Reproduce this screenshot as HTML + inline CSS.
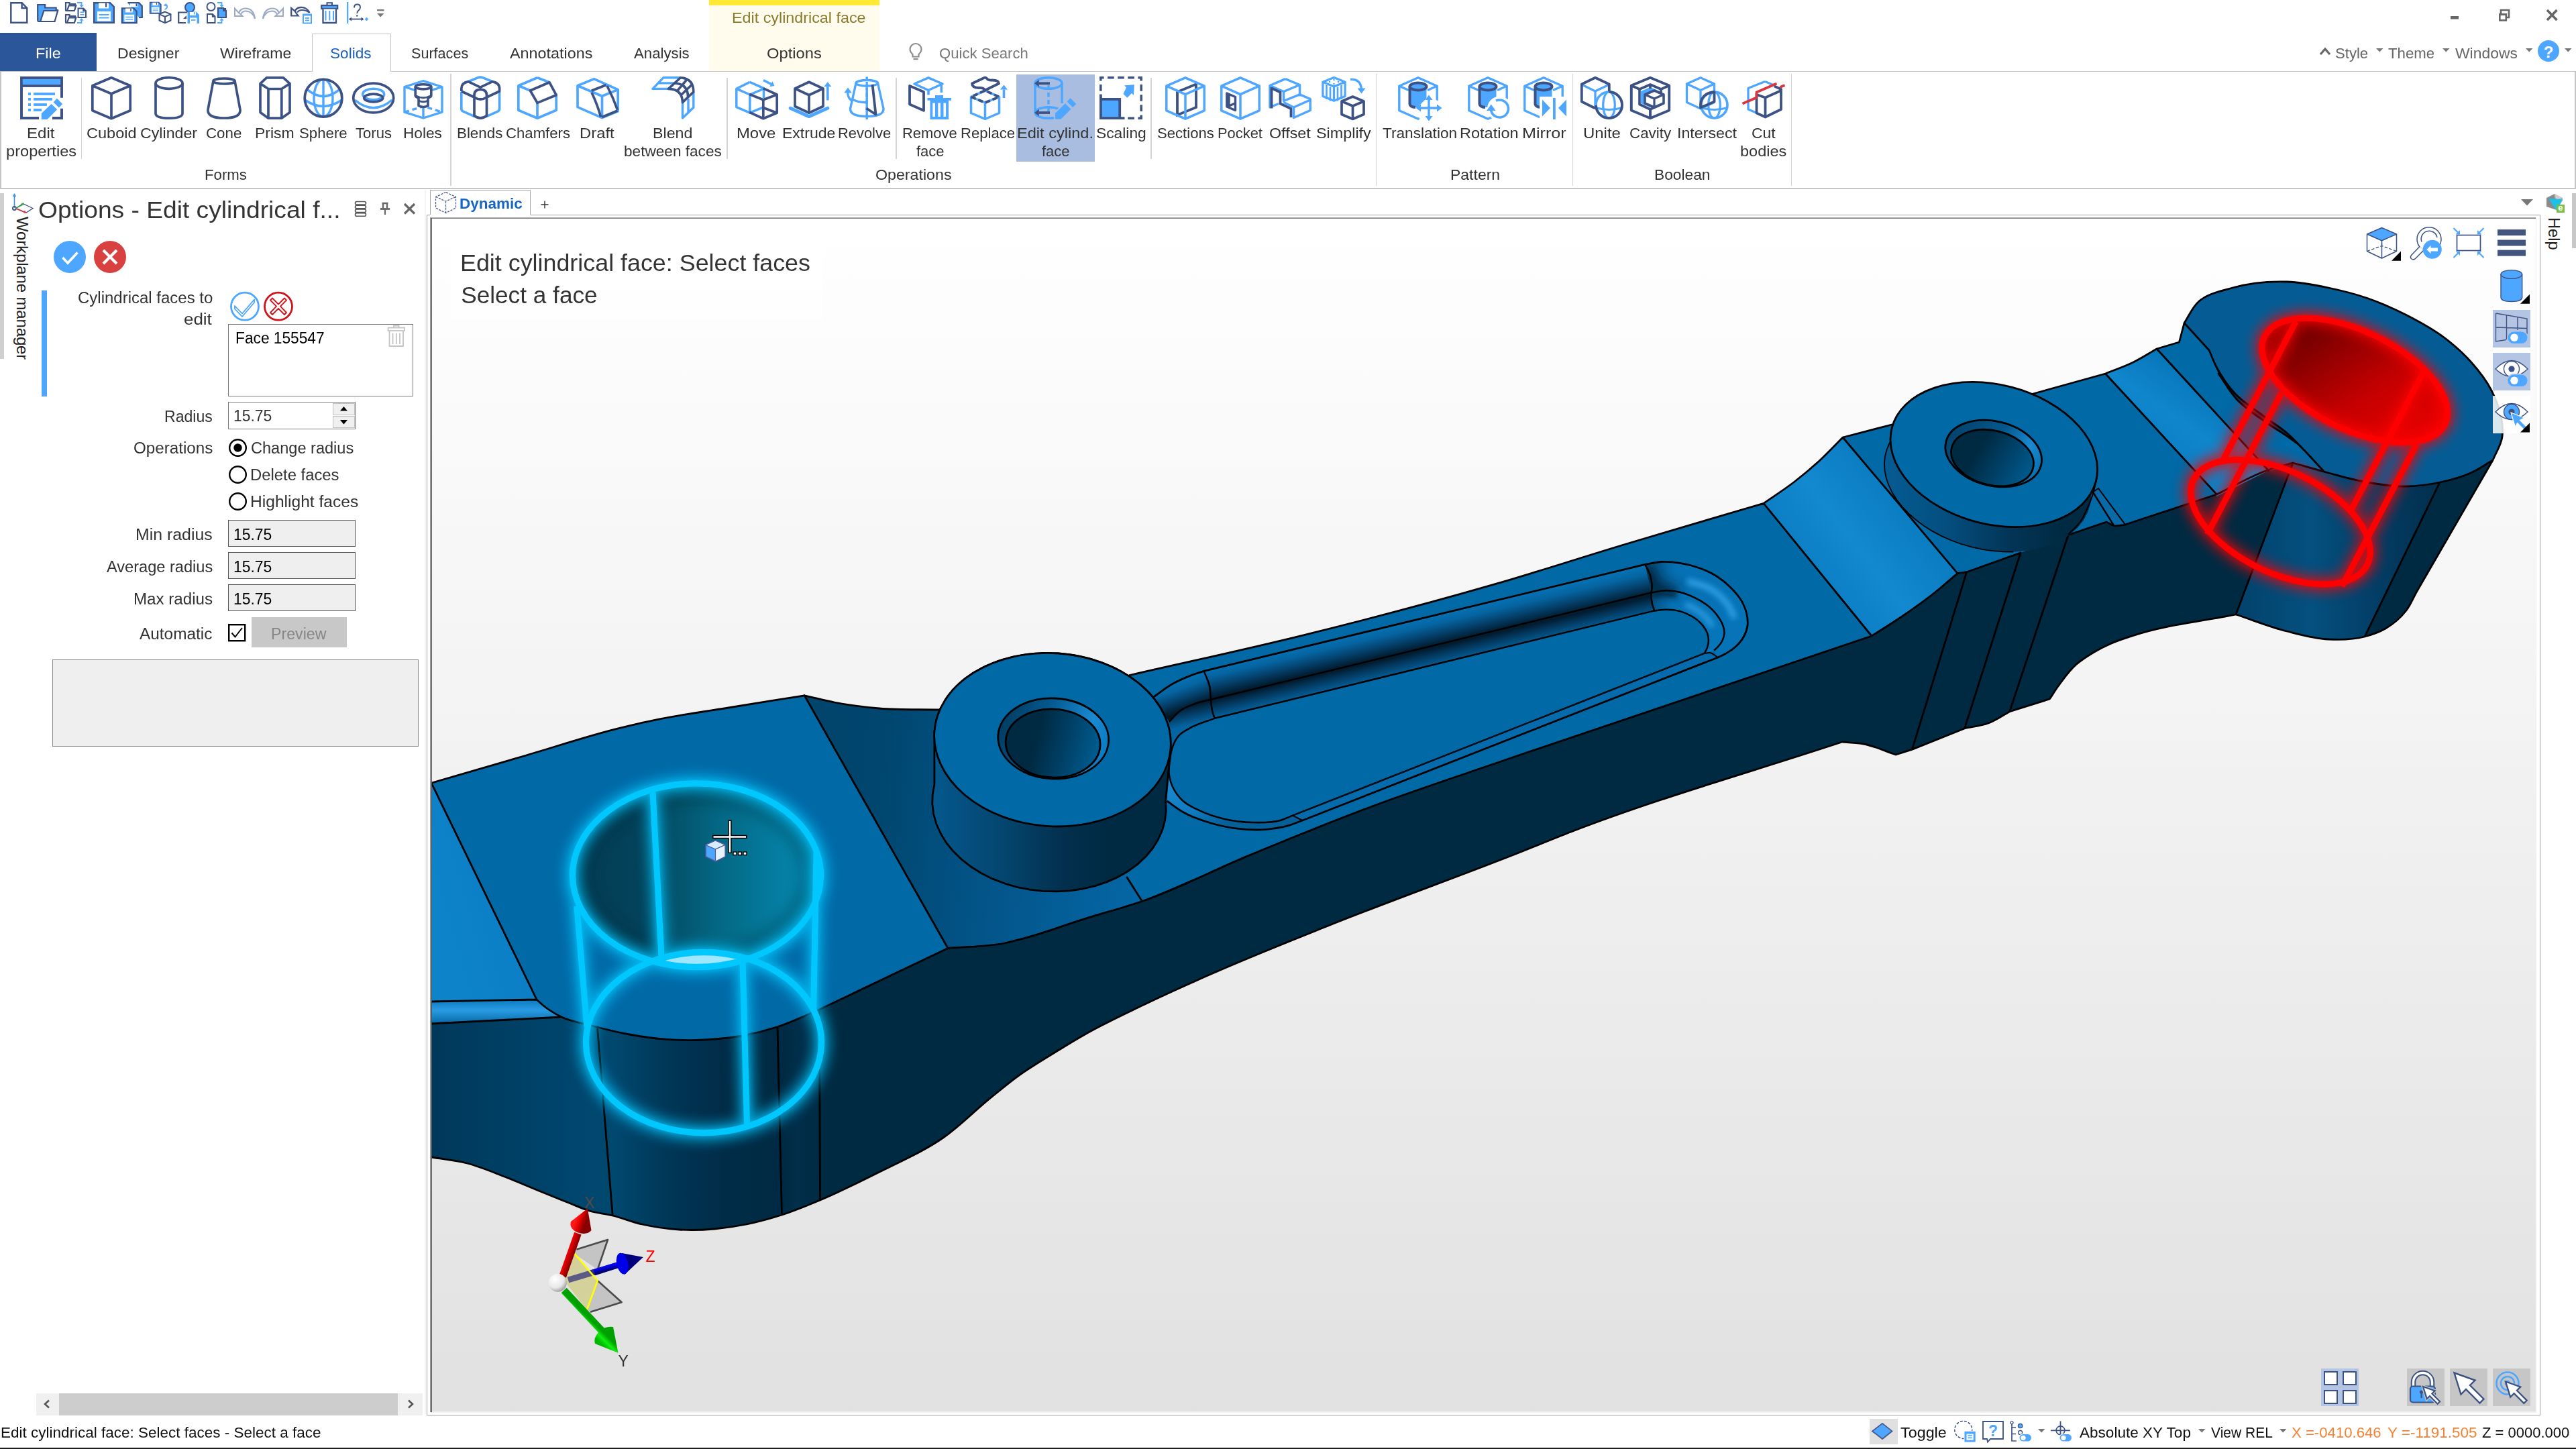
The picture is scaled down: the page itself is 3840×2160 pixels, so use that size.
<!DOCTYPE html>
<html><head><meta charset="utf-8"><title>Designer</title><style>html,body{margin:0;padding:0;width:3840px;height:2160px;overflow:hidden;background:#fff;font-family:"Liberation Sans",sans-serif}
.a{position:absolute;display:block}
.t{position:absolute;white-space:nowrap;line-height:1;transform-origin:0 50%;display:block}
svg{overflow:visible}</style></head><body>
<svg class="a" style="left:15px;top:3px;" width="32" height="32" viewBox="0 0 32 32"><path d="M1.3,1.3L17.62,1.3L25.3,8.98L25.3,30.7L1.3,30.7Z" fill="#fff" stroke="#3d5284" stroke-width="2.4"/><path d="M17.62,1.3L17.62,8.98L25.3,8.98" fill="none" stroke="#3d5284" stroke-width="2.4"/></svg>
<svg class="a" style="left:55px;top:3px;" width="32" height="32" viewBox="0 0 32 32"><path d="M1.2,4L12.18,4L12.18,8.5L28.65,8.5L28.65,12.0L30.785,12.0L26.209999999999997,29L2.42,29Q1.2,29 1.2,26.5Z" fill="#4da6ff" stroke="#3d5284" stroke-width="2.2"/><path d="M5.165,29L10.35,13.0L31.09,13.0L26.514999999999997,29Z" fill="#fff" stroke="#3d5284" stroke-width="2.2"/></svg>
<svg class="a" style="left:97px;top:3px;" width="32" height="32" viewBox="0 0 32 32"><path d="M1,1L6.58,1L6.58,3.16L14.950000000000001,3.16L14.950000000000001,4.84L16.035,4.84L13.709999999999999,13L1.62,13Q1,13 1,11.8Z" fill="#fff" stroke="#3d5284" stroke-width="2.2"/><path d="M3.015,13L5.6499999999999995,5.32L16.189999999999998,5.32L13.865,13Z" fill="#fff" stroke="#3d5284" stroke-width="2.2"/><path d="M1,19L6.58,19L6.58,21.16L14.950000000000001,21.16L14.950000000000001,22.84L16.035,22.84L13.709999999999999,31L1.62,31Q1,31 1,29.8Z" fill="#fff" stroke="#3d5284" stroke-width="2.2"/><path d="M3.015,31L5.6499999999999995,23.32L16.189999999999998,23.32L13.865,31Z" fill="#fff" stroke="#3d5284" stroke-width="2.2"/><path d="M18,1L24.5,1L24.5,5" stroke="#4da6ff" stroke-width="1.8" fill="none"/><path d="M21.3,4.5L27.7,4.5L24.5,8Z" fill="#4da6ff"/><path d="M18,31L24.5,31L24.5,27" stroke="#4da6ff" stroke-width="1.8" fill="none"/><path d="M21.3,27.5L27.7,27.5L24.5,24Z" fill="#4da6ff"/><path d="M19.5,9.5L27.32,9.5L31.0,13.18L31.0,23.0L19.5,23.0Z" fill="#fff" stroke="#3d5284" stroke-width="2"/><path d="M27.32,9.5L27.32,13.18L31.0,13.18" fill="none" stroke="#3d5284" stroke-width="2"/><rect x="22.5" y="14.5" width="6" height="1.6" fill="#4da6ff"/><rect x="22.5" y="18" width="6" height="1.6" fill="#4da6ff"/></svg>
<svg class="a" style="left:139px;top:3px;" width="32" height="32" viewBox="0 0 32 32"><path d="M1.2,1.2L25.0,1.2L30.8,7.0L30.8,30.8L1.2,30.8Z" fill="#4da6ff" stroke="#3d5284" stroke-width="2.40"/><rect x="8.0" y="1.5" width="15.0" height="8.0" fill="#fff"/><rect x="18.0" y="1.5" width="2.2" height="6.0" fill="#3d5284"/><rect x="6.0" y="14.0" width="20.0" height="14.5" fill="#fff"/><rect x="8.5" y="18.0" width="15.0" height="2.0" fill="#4da6ff"/><rect x="8.5" y="22.5" width="15.0" height="2.0" fill="#4da6ff"/></svg>
<svg class="a" style="left:181px;top:3px;" width="32" height="32" viewBox="0 0 32 32"><path d="M9.5,1.2L26,1.2L30.8,6L30.8,23L26,23" fill="#4da6ff" stroke="#3d5284" stroke-width="2.2"/><rect x="13" y="2.3" width="11" height="5" fill="#fff"/><rect x="21.5" y="2.3" width="1.8" height="4" fill="#3d5284"/><path d="M0.88125,9.38125L18.359375,9.38125L22.618750000000002,13.640625L22.618750000000002,31.118750000000002L0.88125,31.118750000000002Z" fill="#4da6ff" stroke="#3d5284" stroke-width="2.29"/><rect x="5.875" y="9.6015625" width="11.015625" height="5.875" fill="#fff"/><rect x="13.21875" y="9.6015625" width="1.615625" height="4.40625" fill="#3d5284"/><rect x="4.40625" y="18.78125" width="14.6875" height="10.6484375" fill="#fff"/><rect x="6.2421875" y="21.71875" width="11.015625" height="1.46875" fill="#4da6ff"/><rect x="6.2421875" y="25.0234375" width="11.015625" height="1.46875" fill="#4da6ff"/></svg>
<svg class="a" style="left:223px;top:3px;" width="32" height="32" viewBox="0 0 32 32"><path d="M0.65625,0.65625L13.671875,0.65625L16.84375,3.828125L16.84375,16.84375L0.65625,16.84375Z" fill="#4da6ff" stroke="#3d5284" stroke-width="1.71"/><rect x="4.375" y="0.8203125" width="8.203125" height="4.375" fill="#fff"/><rect x="9.84375" y="0.8203125" width="1.203125" height="3.28125" fill="#3d5284"/><rect x="3.28125" y="7.65625" width="10.9375" height="7.9296875" fill="#fff"/><rect x="4.6484375" y="9.84375" width="8.203125" height="1.09375" fill="#4da6ff"/><rect x="4.6484375" y="12.3046875" width="8.203125" height="1.09375" fill="#4da6ff"/><path d="M24,3.5Q27.5,5.5 25.5,9Q24.5,10.5 22.5,11" stroke="#4da6ff" stroke-width="1.8" fill="none"/><path d="M20.5,5L24.5,2L25,6.5Z" fill="#4da6ff"/><path d="M23,14.5L14.5,18.2L14.5,27.5L23,31.2L31.5,27.5L31.5,18.2Z" fill="#fff" stroke="#3d5284" stroke-width="2"/><path d="M14.5,18.2L23,22L31.5,18.2M23,22L23,31.2" stroke="#3d5284" stroke-width="2" fill="none"/></svg>
<svg class="a" style="left:265px;top:3px;" width="32" height="32" viewBox="0 0 32 32"><circle cx="18" cy="8" r="7" fill="#4da6ff" stroke="#3d5284" stroke-width="2"/><path d="M1.2,15.5L14,15.5M1.2,14.5L1.2,31L12,31" stroke="#3d5284" stroke-width="2.2" fill="none"/><path d="M8,25L13,25L13,20Z" fill="#3d5284"/><path d="M14.5,14.5L27.5,14.5L32,19L32,32L14.5,32Z" fill="#4da6ff"/><rect x="18" y="15" width="9" height="5" fill="#fff"/><rect x="24" y="15" width="1.6" height="3.5" fill="#4da6ff"/><rect x="18" y="23.5" width="10.5" height="8.5" fill="#fff"/><rect x="20" y="26" width="6.5" height="1.8" fill="#4da6ff"/></svg>
<svg class="a" style="left:308px;top:3px;" width="32" height="32" viewBox="0 0 32 32"><circle cx="6.5" cy="7" r="6" fill="#fff" stroke="#3d5284" stroke-width="2"/><path d="M1,18L8.82,18L12.5,21.68L12.5,31L1,31Z" fill="#fff" stroke="#3d5284" stroke-width="2"/><path d="M8.82,18L8.82,21.68L12.5,21.68" fill="none" stroke="#3d5284" stroke-width="2"/><path d="M16,1L22.5,1L22.5,5" stroke="#4da6ff" stroke-width="1.8" fill="none"/><path d="M19.3,4.5L25.7,4.5L22.5,8Z" fill="#4da6ff"/><path d="M16,31L22.5,31L22.5,27" stroke="#4da6ff" stroke-width="1.8" fill="none"/><path d="M19.3,27.5L25.7,27.5L22.5,24Z" fill="#4da6ff"/><path d="M17,9L25.16,9L29,12.84L29,23L17,23Z" fill="#4da6ff" stroke="#3d5284" stroke-width="2.2"/><path d="M25.16,9L25.16,12.84L29,12.84" fill="none" stroke="#3d5284" stroke-width="2.2"/><path d="M25.2,9L29,9L29,13.4Z" fill="#3d5284"/></svg>
<svg class="a" style="left:349px;top:3px;" width="32" height="32" viewBox="0 0 32 32"><path d="M31,25Q29,9 16,9.5Q9,10 6.5,17" stroke="#9daac6" stroke-width="2.2" fill="none"/><path d="M31,25Q27,13 16.5,13.5Q12,14 10,18" stroke="#9daac6" stroke-width="1.8" fill="none"/><path d="M1,9.5L1,21L12.5,21L9.5,18L6.8,16Z" fill="none" stroke="#9daac6" stroke-width="2"/></svg>
<svg class="a" style="left:391px;top:3px;" width="32" height="32" viewBox="0 0 32 32"><g transform="translate(32,0) scale(-1,1)"><path d="M31,25Q29,9 16,9.5Q9,10 6.5,17" stroke="#9daac6" stroke-width="2.2" fill="none"/><path d="M31,25Q27,13 16.5,13.5Q12,14 10,18" stroke="#9daac6" stroke-width="1.8" fill="none"/><path d="M1,9.5L1,21L12.5,21L9.5,18L6.8,16Z" fill="none" stroke="#9daac6" stroke-width="2"/></g></svg>
<svg class="a" style="left:433px;top:3px;" width="32" height="32" viewBox="0 0 32 32"><path d="M28.5,16Q24,7.5 15,8Q9,8.5 6.5,13.5" stroke="#3d5284" stroke-width="2.3" fill="none"/><path d="M28.5,16Q23,11.5 16,12Q12,12.5 10,15.5" stroke="#3d5284" stroke-width="2" fill="none"/><path d="M1.2,9L1.2,20.5L11.5,20.5L9.5,18L6.8,14Z" fill="none" stroke="#3d5284" stroke-width="2.2"/><rect x="18" y="17.5" width="14" height="15" fill="#4da6ff"/><rect x="20" y="20.5" width="10" height="10" fill="#fff"/><rect x="22" y="23" width="6" height="1.8" fill="#4da6ff"/><rect x="22" y="26.5" width="6" height="1.8" fill="#4da6ff"/></svg>
<svg class="a" style="left:478px;top:3px;" width="32" height="32" viewBox="0 0 32 32"><rect x="9.5" y="1.2" width="7.5" height="4" fill="#fff" stroke="#3d5284" stroke-width="2"/><rect x="1.2" y="5" width="24" height="5" fill="#4da6ff" stroke="#3d5284" stroke-width="2.2"/><path d="M3.5,10.5L3.5,31L23,31L23,10.5" fill="#fff" stroke="#3d5284" stroke-width="2.3"/><path d="M7.5,13L7.5,27.5M13.3,13L13.3,27.5M19,13L19,27.5" stroke="#4da6ff" stroke-width="2"/></svg>
<svg class="a" style="left:517px;top:3px;" width="32" height="32" viewBox="0 0 32 32"><path d="M1.2,0L1.2,32" stroke="#4da6ff" stroke-width="2.2"/><path d="M4,25.5L23.5,25.5" stroke="#3d5284" stroke-width="1.8"/><path d="M3,25.5L7,22.5L7,28.5ZM25.5,25.5L21.5,22.5L21.5,28.5Z" fill="#3d5284"/><path d="M27,25.5L32,25.5M29.5,23L29.5,28" stroke="#4da6ff" stroke-width="1.8"/><path d="M11,8.5Q11,3.5 15.5,3.5Q20,3.5 20,8Q20,10.5 17.5,12.5Q15.3,14 15.3,17" stroke="#3d5284" stroke-width="1.9" fill="none"/><circle cx="15.3" cy="20.5" r="1.3" fill="#3d5284"/></svg>
<svg class="a" style="left:562px;top:14px;" width="11" height="12" viewBox="0 0 11 12"><rect x="0" y="0" width="10.5" height="2.3" fill="#777"/><path d="M0,6L10.5,6L5.25,11.5Z" fill="#777"/></svg>
<div class="a" style="left:1057px;top:0px;width:254px;height:106px;background:#fffcee;"></div>
<div class="a" style="left:1057px;top:0px;width:254px;height:7.5px;background:#ffe933;"></div>
<span class="t" style="left:1090.8px;top:16.1px;font-size:21.8px;color:#8a7b2c;transform:scaleX(1.0695);">Edit cylindrical face</span>
<svg class="a" style="left:3640px;top:8px;" width="190" height="30" viewBox="0 0 190 30"><rect x="13" y="16" width="12" height="4.5" fill="#666"/><path d="M88,13.5L88,7L100,7L100,18L94,18" stroke="#666" stroke-width="2.6" fill="none"/><rect x="86.3" y="13.3" width="9.5" height="9" stroke="#666" stroke-width="2.6" fill="#fff"/><rect x="85" y="12" width="12.1" height="3" fill="#666"/><path d="M157,7L171.5,22M171.5,7L157,22" stroke="#666" stroke-width="3.6"/></svg>
<div class="a" style="left:0px;top:49px;width:144px;height:57px;background:#2b579a;"></div>
<span class="t" style="left:52.7px;top:68.5px;font-size:22.3px;color:#fff;transform:scaleX(1.0503);">File</span>
<div class="a" style="left:0px;top:105.5px;width:3840px;height:1.5px;background:#c6c6c6;"></div>
<div class="a" style="left:464.5px;top:49.5px;width:118px;height:58px;background:#fff;border:1.5px solid #c6c6c6;box-sizing:border-box;border-bottom:none;"></div>
<span class="t" style="left:175.4px;top:68.5px;font-size:22.3px;color:#333;transform:scaleX(1.0349);">Designer</span>
<span class="t" style="left:327.8px;top:68.5px;font-size:22.3px;color:#333;transform:scaleX(1.0345);">Wireframe</span>
<span class="t" style="left:492.3px;top:68.5px;font-size:22.3px;color:#1a5fc0;transform:scaleX(1.0147);">Solids</span>
<span class="t" style="left:612.7px;top:68.5px;font-size:22.3px;color:#333;transform:scaleX(0.9683);">Surfaces</span>
<span class="t" style="left:759.8px;top:68.5px;font-size:22.3px;color:#333;transform:scaleX(1.0472);">Annotations</span>
<span class="t" style="left:944.7px;top:68.5px;font-size:22.3px;color:#333;transform:scaleX(0.9959);">Analysis</span>
<span class="t" style="left:1142.5px;top:68.5px;font-size:22.3px;color:#333;transform:scaleX(1.0643);">Options</span>
<svg class="a" style="left:1355px;top:64px;" width="24" height="28" viewBox="0 0 24 28"><path d="M5.5,17Q1.5,13 1.5,9.5A8.5,8.5 0 0 1 18.5,9.5Q18.5,13 14.5,17L14.5,20.5L5.5,20.5Z" stroke="#8c8c8c" stroke-width="2.2" fill="none"/><path d="M6.5,24L13.5,24" stroke="#8c8c8c" stroke-width="2.4"/></svg>
<span class="t" style="left:1399.5px;top:68.9px;font-size:21.8px;color:#777;transform:scaleX(1.0152);">Quick Search</span>
<svg class="a" style="left:3457px;top:70px;" width="20" height="14" viewBox="0 0 20 14"><path d="M2,11L9,3L16,11" stroke="#666" stroke-width="3.2" fill="none"/></svg>
<span class="t" style="left:3480.5px;top:68.5px;font-size:22.3px;color:#666;transform:scaleX(0.9915);">Style</span>
<span class="t" style="left:3560.2px;top:68.5px;font-size:22.3px;color:#666;transform:scaleX(0.9963);">Theme</span>
<span class="t" style="left:3659.6px;top:68.5px;font-size:22.3px;color:#666;transform:scaleX(1.0272);">Windows</span>
<svg class="a" style="left:3542px;top:72px;" width="11" height="6" viewBox="0 0 11 6"><path d="M0,0L10.5,0L5.25,5.5Z" fill="#777"/></svg>
<svg class="a" style="left:3640.5px;top:72px;" width="11" height="6" viewBox="0 0 11 6"><path d="M0,0L10.5,0L5.25,5.5Z" fill="#777"/></svg>
<svg class="a" style="left:3764.5px;top:72px;" width="11" height="6" viewBox="0 0 11 6"><path d="M0,0L10.5,0L5.25,5.5Z" fill="#777"/></svg>
<svg class="a" style="left:3823px;top:72px;" width="11" height="6" viewBox="0 0 11 6"><path d="M0,0L10.5,0L5.25,5.5Z" fill="#777"/></svg>
<div class="a" style="left:3783px;top:60px;width:32px;height:32px;background:#4da6ff;border-radius:16px;"></div>
<span class="t" style="left:3791.8px;top:66.0px;font-size:24px;color:#fff;font-weight:bold;">?</span>
<div class="a" style="left:0px;top:106.5px;width:3840px;height:174px;background:#fff;"></div>
<div class="a" style="left:0px;top:280px;width:3840px;height:1.5px;background:#c6c6c6;"></div>
<div class="a" style="left:0px;top:107px;width:1.5px;height:174px;background:#c6c6c6;"></div>
<div class="a" style="left:3838px;top:107px;width:1.5px;height:174px;background:#c6c6c6;"></div>
<div class="a" style="left:1515px;top:111px;width:117px;height:130px;background:#a9bde0;"></div>
<svg class="a" style="left:30px;top:114px;overflow:visible;" width="66" height="66" viewBox="0 0 66 66"><path d="M62,31.7L62,2L2,2L2,62L28,62M48,62L62,62L62,47.8" fill="none" stroke="#3d5284" stroke-width="3.9"/><rect x="3.9" y="3.9" width="56.2" height="8.2" fill="#4da6ff"/><rect x="2" y="12.1" width="60" height="3.8" fill="#3d5284"/><rect x="12" y="24.1" width="4.1" height="3.8" fill="#4da6ff"/><rect x="20.1" y="24.1" width="31.9" height="3.8" fill="#4da6ff"/><rect x="12" y="32.0" width="4.1" height="3.8" fill="#4da6ff"/><rect x="20.1" y="32.0" width="27.8" height="3.8" fill="#4da6ff"/><rect x="12" y="40.1" width="4.1" height="3.8" fill="#4da6ff"/><rect x="20.1" y="40.1" width="19.8" height="3.8" fill="#4da6ff"/><rect x="12" y="48.0" width="4.1" height="3.8" fill="#4da6ff"/><rect x="20.1" y="48.0" width="11.8" height="3.8" fill="#4da6ff"/><path d="M31.8,64L31.8,55L46.5,41L55.2,49.2L40.5,64ZM49.6,38.2L55,32.8L63.2,41L57.8,46.4Z" fill="#4da6ff"/></svg>
<span class="t" style="left:40.3px;top:187.9px;font-size:21.8px;color:#333;transform:scaleX(1.1024);">Edit</span>
<span class="t" style="left:9.1px;top:214.5px;font-size:21.8px;color:#333;transform:scaleX(1.0846);">properties</span>
<svg class="a" style="left:136px;top:114px;overflow:visible;" width="66" height="66" viewBox="0 0 66 66"><path d="M30,1.8L1.8000000000000007,13.8L1.8000000000000007,50.7L30,62.7L58.2,50.7L58.2,13.8ZM1.8000000000000007,13.8L30,25.8L58.2,13.8M30,25.8L30,62.7" stroke="#3d5284" stroke-width="3.7" fill="none" stroke-linejoin="round" stroke-linecap="butt" /></svg>
<span class="t" style="left:128.9px;top:187.9px;font-size:21.8px;color:#333;transform:scaleX(1.0802);">Cuboid</span>
<svg class="a" style="left:230px;top:114px;overflow:visible;" width="66" height="66" viewBox="0 0 66 66"><ellipse cx="22" cy="10" rx="20" ry="8.3" stroke="#3d5284" stroke-width="3.7" fill="none"/><path d="M2,10L2,55Q2,62.2 22,62.2Q42,62.2 42,55L42,10" stroke="#3d5284" stroke-width="3.7" fill="none" stroke-linejoin="round" stroke-linecap="butt" /></svg>
<span class="t" style="left:209.1px;top:187.9px;font-size:21.8px;color:#333;transform:scaleX(1.0638);">Cylinder</span>
<svg class="a" style="left:308px;top:114px;overflow:visible;" width="66" height="66" viewBox="0 0 66 66"><ellipse cx="26" cy="7" rx="16.2" ry="4" stroke="#3d5284" stroke-width="3.7" fill="none"/><path d="M9.8,7.5L1.9,50Q1.5,62 26,62Q50.5,62 50.1,50L42.2,7.5" stroke="#3d5284" stroke-width="3.7" fill="none" stroke-linejoin="round" stroke-linecap="butt" /></svg>
<span class="t" style="left:307.2px;top:187.9px;font-size:21.8px;color:#333;transform:scaleX(1.0225);">Cone</span>
<svg class="a" style="left:386px;top:114px;overflow:visible;" width="66" height="66" viewBox="0 0 66 66"><path d="M11.4,1.8L36.4,1.8L46,10.6L46,53.6L33.8,62.2L14,62.2L2,53.6L2,10.6ZM2,10.6L14,18.5L33.8,18.5L46,10.6M14,18.5L14,62.2M33.8,18.5L33.8,62.2" stroke="#3d5284" stroke-width="3.7" fill="none" stroke-linejoin="round" stroke-linecap="butt" /></svg>
<span class="t" style="left:380.4px;top:187.9px;font-size:21.8px;color:#333;transform:scaleX(1.0547);">Prism</span>
<svg class="a" style="left:452px;top:114px;overflow:visible;" width="66" height="66" viewBox="0 0 66 66"><ellipse cx="30" cy="32.2" rx="14" ry="27.8" stroke="#4da6ff" stroke-width="3.4" fill="none"/><path d="M30,4.400000000000002L30,60.0" stroke="#4da6ff" stroke-width="3.4"/><path d="M5.5,19.1Q30,39.7 54.5,19.1M2.5,35.0Q30,53.9 57.5,35.0" stroke="#4da6ff" stroke-width="3.4" fill="none"/><circle cx="30" cy="32.2" r="27.8" stroke="#3d5284" stroke-width="3.8" fill="none"/></svg>
<span class="t" style="left:446.2px;top:187.9px;font-size:21.8px;color:#333;transform:scaleX(1.0196);">Sphere</span>
<svg class="a" style="left:525px;top:114px;overflow:visible;" width="66" height="66" viewBox="0 0 66 66"><path d="M4,35Q31.7,58.5 59.4,35" stroke="#4da6ff" stroke-width="3.5" fill="none"/><ellipse cx="31.7" cy="26.5" rx="16" ry="8.3" stroke="#4da6ff" stroke-width="3.5" fill="none"/><ellipse cx="31.7" cy="32" rx="30" ry="21.8" stroke="#3d5284" stroke-width="3.7" fill="none"/><ellipse cx="31.7" cy="32" rx="14" ry="5.8" stroke="#3d5284" stroke-width="3.7" fill="none"/></svg>
<span class="t" style="left:530.2px;top:187.9px;font-size:21.8px;color:#333;transform:scaleX(1.0120);">Torus</span>
<svg class="a" style="left:601px;top:114px;overflow:visible;" width="66" height="66" viewBox="0 0 66 66"><path d="M30,6.7L2,15.5L2,53.2L30,62.0L58,53.2L58,15.5Z" stroke="#4da6ff" stroke-width="3.4" fill="none" stroke-linejoin="round" stroke-linecap="butt" /><path d="M2,15.5L30,24.3L58,15.5M30,24.3L30,62" stroke="#4da6ff" stroke-width="3.4" fill="none" stroke-linejoin="round" stroke-linecap="butt" /><path d="M2,53.2L30,44.4L58,53.2" stroke="#4da6ff" stroke-width="3.4" fill="none" stroke-linejoin="round" stroke-linecap="butt" stroke-dasharray="7 5"/><path d="M18.2,15.3L18.2,28.5Q18.2,30.5 23,32L23,43.5Q30,47.5 37,43.5L37,32Q41.8,30.5 41.8,28.5L41.8,15.3" fill="#fff" stroke="#3d5284" stroke-width="3.6"/><ellipse cx="30" cy="15.3" rx="11.8" ry="3.6" stroke="#3d5284" stroke-width="3.6" fill="#fff"/><path d="M18.2,28.5Q30,35 41.8,28.5M23,36Q30,39.5 37,36" stroke="#3d5284" stroke-width="3" fill="none" stroke-linejoin="round" stroke-linecap="butt" /></svg>
<span class="t" style="left:601.4px;top:187.9px;font-size:21.8px;color:#333;transform:scaleX(1.0399);">Holes</span>
<svg class="a" style="left:686px;top:114px;overflow:visible;" width="66" height="66" viewBox="0 0 66 66"><path d="M1.8,23L1.8,48Q1.8,51 4.5,52.2L22,59.8M38.5,59.8L56,52.2Q58.6,51 58.6,48L58.6,23M12.7,7.5L26,1.9Q30,0.4 34,1.9L47.7,7.5" stroke="#4da6ff" stroke-width="3.6" fill="none" stroke-linejoin="round" stroke-linecap="butt" /><path d="M1.8,22L1.8,18Q1.8,9.5 12,7.6L30,16.2L48,7.6Q58.6,9.5 58.6,18L58.6,22L39.5,31M1.8,22L21,31M21,58.5L21,28Q21,19.3 30.2,19.3Q39.5,19.3 39.5,28L39.5,58.5Q30.2,65.5 21,58.5ZM21,31Q30.2,37 39.5,31" stroke="#3d5284" stroke-width="3.7" fill="none" stroke-linejoin="round" stroke-linecap="butt" /></svg>
<span class="t" style="left:681.2px;top:187.9px;font-size:21.8px;color:#333;transform:scaleX(1.0249);">Blends</span>
<svg class="a" style="left:771px;top:114px;overflow:visible;" width="66" height="66" viewBox="0 0 66 66"><path d="M30,1.8L1.8,13.7L1.8,50.2L30,62.2L58.2,50.2L58.2,27.7M30,39.4L30,62.2M30,1.8L48.1,8.8M1.8,13.7L19.4,21" stroke="#4da6ff" stroke-width="3.7" fill="none" stroke-linejoin="round" stroke-linecap="butt" /><path d="M19.4,21L48.1,8.8L58.2,27.7L30,39.4Z" stroke="#3d5284" stroke-width="3.7" fill="none" stroke-linejoin="round" stroke-linecap="butt" /></svg>
<span class="t" style="left:753.7px;top:187.9px;font-size:21.8px;color:#333;transform:scaleX(1.0165);">Chamfers</span>
<svg class="a" style="left:858.5px;top:114px;overflow:visible;" width="66" height="66" viewBox="0 0 66 66"><path d="M26.6,3.6L2,13.7L2,45.6L38.5,61.6L62.2,51.8L62.2,19.6ZM2,13.7L38.5,29.3L62.2,19.6M38.5,29.3L38.5,61.6" stroke="#4da6ff" stroke-width="3.7" fill="none" stroke-linejoin="round" stroke-linecap="butt" /><path d="M22.7,21.3L44.4,12.7M23,24Q32,43 36.6,60.3M46,14Q55.3,32 61.5,50M38.5,60.5L61.5,51" stroke="#3d5284" stroke-width="3.7" fill="none" stroke-linejoin="round" stroke-linecap="butt" /></svg>
<span class="t" style="left:864.3px;top:187.9px;font-size:21.8px;color:#333;transform:scaleX(1.0936);">Draft</span>
<svg class="a" style="left:971.5px;top:114px;overflow:visible;" width="66" height="66" viewBox="0 0 66 66"><path d="M42.4,1.8L16.8,1.8L1,18.4L24.5,18.4M9,9.9L33.9,9.9M45.5,38.6L45.5,62L61.8,46.3L61.8,23M54,33L54,54" stroke="#4da6ff" stroke-width="3.4" fill="none" stroke-linejoin="round" stroke-linecap="butt" /><path d="M42.4,1.8Q61.8,3 61.8,23L45.5,38.6Q45,19 24.5,18.4ZM34,10Q53.5,11 53.6,30.8M52,4.5L37.5,21.5M59.5,12L42.5,28.5" stroke="#3d5284" stroke-width="3.6" fill="none" stroke-linejoin="round" stroke-linecap="butt" /></svg>
<span class="t" style="left:973.1px;top:187.9px;font-size:21.8px;color:#333;transform:scaleX(1.0642);">Blend</span>
<span class="t" style="left:929.7px;top:214.5px;font-size:21.8px;color:#333;transform:scaleX(1.0373);">between faces</span>
<svg class="a" style="left:1096px;top:114px;overflow:visible;" width="66" height="66" viewBox="0 0 66 66"><path d="M21.8,8.3L1.8,18.4L1.8,45.6L21.8,54.2L42.5,45.6M21.8,8.3L42.5,17.6L42.5,32M1.8,18.4L21.8,27L42.5,18.4M21.8,27L21.8,54.2" stroke="#4da6ff" stroke-width="3.5" fill="none" stroke-linejoin="round" stroke-linecap="butt" /><path d="M42,5.5L53.3,11.3" stroke="#4da6ff" stroke-width="3.5"/><path d="M58.5,14L51.2,15.3L55.4,7.3Z" fill="#4da6ff"/><path d="M41.8,17.6L62.2,27L62.2,54.2L41.8,62.7L21.2,53.4M21.2,26.5L41.8,34.8L62.2,27M41.8,34.8L41.8,62.7M41.8,46.5L62,54.2" stroke="#3d5284" stroke-width="3.7" fill="none" stroke-linejoin="round" stroke-linecap="butt" /></svg>
<span class="t" style="left:1097.9px;top:187.9px;font-size:21.8px;color:#333;transform:scaleX(1.0945);">Move</span>
<svg class="a" style="left:1175.5px;top:114px;overflow:visible;" width="66" height="66" viewBox="0 0 66 66"><path d="M2.2,47.2L30,59.6L57.8,47.2" fill="none" stroke="#4da6ff" stroke-width="5" stroke-linejoin="round" stroke-linecap="round"/><path d="M30,8.3L9,18L9,45L30,54.2L51,45L51,18Z" fill="#fff"/><path d="M30,8.3L9,18.0L9,44.5L30,54.2L51,44.5L51,18.0ZM9,18.0L30,27.7L51,18.0M30,27.7L30,54.2" stroke="#3d5284" stroke-width="3.7" fill="none" stroke-linejoin="round" stroke-linecap="butt" /><path d="M57.8,35.5L57.8,15.2" stroke="#4da6ff" stroke-width="3.6"/><path d="M57.8,8L63.3,15.2L52.3,15.2Z" fill="#4da6ff"/></svg>
<span class="t" style="left:1165.9px;top:187.9px;font-size:21.8px;color:#333;transform:scaleX(1.0564);">Extrude</span>
<svg class="a" style="left:1257.5px;top:114px;overflow:visible;" width="66" height="66" viewBox="0 0 66 66"><ellipse cx="34.2" cy="9.8" rx="16.3" ry="4.3" stroke="#4da6ff" stroke-width="3.4" fill="none"/><path d="M18,10L9.5,48Q9,59.5 34.2,59.5Q59.5,59.5 59,48L50.5,10M12.5,33.5Q18,38.5 34,38.8" stroke="#4da6ff" stroke-width="3.4" fill="none" stroke-linejoin="round" stroke-linecap="butt" /><path d="M34.2,0.5L34.2,64" stroke="#4da6ff" stroke-width="3.4" fill="none" stroke-linejoin="round" stroke-linecap="butt" stroke-dasharray="4.3 3.2 100"/><path d="M34.2,14L34.2,50" stroke="#4da6ff" stroke-width="3.4" fill="none" stroke-linejoin="round" stroke-linecap="butt" stroke-dasharray="6 4.5"/><path d="M5.6,24Q6,33 13,37" stroke="#4da6ff" stroke-width="3.4" fill="none"/><path d="M0.3,24.5L6,16.5L11.8,24.5Z" fill="#4da6ff"/><path d="M42.5,12L47.5,56.5L33.5,47.5" stroke="#3d5284" stroke-width="3.8" fill="none" stroke-linejoin="round" stroke-linecap="butt" /></svg>
<span class="t" style="left:1249.0px;top:187.9px;font-size:21.8px;color:#333;transform:scaleX(1.0043);">Revolve</span>
<svg class="a" style="left:1354px;top:114px;overflow:visible;" width="66" height="66" viewBox="0 0 66 66"><path d="M30,1.8L9,11L30,20.5L51,11ZM49.3,11L49.3,24M30,20.5L30,27.5" stroke="#4da6ff" stroke-width="3.5" fill="none" stroke-linejoin="round" stroke-linecap="butt" /><path d="M2,14L2,41.5L23,50.8L23,23Z" stroke="#3d5284" stroke-width="3.8" fill="none" stroke-linejoin="round" stroke-linecap="butt" /><path d="M28.5,32L64,32L64,35.7L60,35.7L60,64L32.5,64L32.5,35.7L28.5,35.7ZM40,32L40,28L52,28L52,32Z" fill="#4da6ff"/><rect x="36.3" y="39.5" width="3.6" height="20.5" fill="#fff"/><rect x="44.4" y="39.5" width="3.6" height="20.5" fill="#fff"/><rect x="52.5" y="39.5" width="3.6" height="20.5" fill="#fff"/></svg>
<span class="t" style="left:1344.6px;top:187.9px;font-size:21.8px;color:#333;transform:scaleX(1.0066);">Remove</span>
<span class="t" style="left:1365.5px;top:214.5px;font-size:21.8px;color:#333;transform:scaleX(1.0102);">face</span>
<svg class="a" style="left:1446px;top:114px;overflow:visible;" width="66" height="66" viewBox="0 0 66 66"><path d="M1.5,30.5L1.5,54.5L22.5,63.5L43.5,54.5L43.5,30.5M22.5,39L22.5,63.5M1.5,30.5L22.5,21L43.5,30.5L22.5,39Z" stroke="#4da6ff" stroke-width="3.5" fill="none" stroke-linejoin="round" stroke-linecap="butt" /><path d="M1.5,30.5L22.5,39L43.5,30.5L22.5,21Z" stroke="#3d5284" stroke-width="3.8" fill="none" stroke-linejoin="round" stroke-linecap="butt" stroke-dasharray="7.5 4"/><path d="M3,10.5L20,2.5Q23,0.5 25,3Q27,6 33,5.5Q43,5.5 43,10.5L22.5,20.5Q20,16.5 13,17Q3,16.5 3,10.5Z" stroke="#3d5284" stroke-width="3.8" fill="none" stroke-linejoin="round" stroke-linecap="butt" /><path d="M50.5,32L50.5,19.6" stroke="#4da6ff" stroke-width="3.6"/><path d="M50.5,12.5L56.0,19.6L45.0,19.6Z" fill="#4da6ff"/></svg>
<span class="t" style="left:1432.0px;top:187.9px;font-size:21.8px;color:#333;transform:scaleX(1.0126);">Replace</span>
<svg class="a" style="left:1541px;top:114px;overflow:visible;" width="66" height="66" viewBox="0 0 66 66"><ellipse cx="22" cy="10" rx="20" ry="8.2" stroke="#4da6ff" stroke-width="3.5" fill="none"/><ellipse cx="22" cy="54" rx="20" ry="8.2" stroke="#4da6ff" stroke-width="3.5" fill="none"/><path d="M2,10L2,54M42,10L42,40" stroke="#4da6ff" stroke-width="3.5" fill="none" stroke-linejoin="round" stroke-linecap="butt" /><path d="M22,13L22,52" stroke="#4da6ff" stroke-width="3.5" fill="none" stroke-linejoin="round" stroke-linecap="butt" stroke-dasharray="6.5 4.5"/><path d="M24,10.3L7.8,10.3" stroke="#3d5284" stroke-width="3.8"/><path d="M1,10.3L7.8,5.1L7.8,15.5Z" fill="#3d5284"/><path d="M24,54L7.8,54.0" stroke="#3d5284" stroke-width="3.8"/><path d="M1,54L7.8,48.8L7.8,59.2Z" fill="#3d5284"/><path d="M32,62L32,54.98L46.82,40.16L55.400000000000006,48.74L40.58,63.56L32,63.56ZM49.55,37.43L54.620000000000005,32.36L63.2,40.94L58.13,46.01Z" fill="#a9bde0" stroke="#a9bde0" stroke-width="3.9000000000000004" stroke-linejoin="round"/><path d="M32,62L32,54.98L46.82,40.16L55.400000000000006,48.74L40.58,63.56L32,63.56ZM49.55,37.43L54.620000000000005,32.36L63.2,40.94L58.13,46.01Z" fill="#4da6ff"/></svg>
<span class="t" style="left:1516.0px;top:187.9px;font-size:21.8px;color:#333;transform:scaleX(1.0815);">Edit cylind.</span>
<span class="t" style="left:1552.5px;top:214.5px;font-size:21.8px;color:#333;transform:scaleX(1.0102);">face</span>
<svg class="a" style="left:1639px;top:114px;overflow:visible;" width="66" height="66" viewBox="0 0 66 66"><rect x="1.8" y="1.8" width="60.4" height="60.4" fill="none" stroke="#3d5284" stroke-width="3.5" stroke-dasharray="9.6 5.5" stroke-dashoffset="4.8"/><path d="M1.8,26.5L1.8,62.2L37.5,62.2" stroke="#3d5284" stroke-width="3.6" fill="none"/><rect x="1.9" y="33.9" width="28.3" height="28.2" fill="#4da6ff" stroke="#3d5284" stroke-width="3.8"/><path d="M35.5,26L41.3,31.8L48,25L51,28L51.8,12.3L37,13.2L40,16.2Z" fill="#4da6ff"/></svg>
<span class="t" style="left:1633.9px;top:187.9px;font-size:21.8px;color:#333;transform:scaleX(1.0460);">Scaling</span>
<svg class="a" style="left:1737px;top:114px;overflow:visible;" width="66" height="66" viewBox="0 0 66 66"><path d="M18,23L46,11.5L46,46L18,57.5Z" fill="none" stroke="#3d5284" stroke-width="3.8"/><path d="M30,1.8L1.8000000000000007,14.200000000000001L1.8000000000000007,50.800000000000004L30,63.2L58.2,50.800000000000004L58.2,14.200000000000001ZM1.8000000000000007,14.200000000000001L30,26.6L58.2,14.200000000000001M30,26.6L30,63.2" stroke="#4da6ff" stroke-width="3.5" fill="none" stroke-linejoin="round" stroke-linecap="butt" /></svg>
<span class="t" style="left:1724.5px;top:187.9px;font-size:21.8px;color:#333;transform:scaleX(1.0147);">Sections</span>
<svg class="a" style="left:1819px;top:114px;overflow:visible;" width="66" height="66" viewBox="0 0 66 66"><path d="M30,1.8L1.8000000000000007,14.200000000000001L1.8000000000000007,50.800000000000004L30,63.2L58.2,50.800000000000004L58.2,14.200000000000001ZM1.8000000000000007,14.200000000000001L30,26.6L58.2,14.200000000000001M30,26.6L30,63.2" stroke="#4da6ff" stroke-width="3.5" fill="none" stroke-linejoin="round" stroke-linecap="butt" /><path d="M9.8,25L22.5,30.5L22.5,50.5L9.8,45ZM13,44L22,40M13,44.5L13,28" stroke="#3d5284" stroke-width="3.4" fill="none" stroke-linejoin="round" stroke-linecap="butt" /></svg>
<span class="t" style="left:1814.6px;top:187.9px;font-size:21.8px;color:#333;transform:scaleX(1.0046);">Pocket</span>
<svg class="a" style="left:1891px;top:114px;overflow:visible;" width="66" height="66" viewBox="0 0 66 66"><path d="M25,3.6L2,13.5L2,46L15,40.5M25,3.6L46.5,12.5L46.5,29.5M2,13.5L22.5,22.5L46.5,12.5M22.5,22.5L22.5,36.5L46.5,26.8L62.2,33.5L62.2,50.5L37.5,61.5L37.5,46L22.5,38.5M37.5,46L62.2,35" stroke="#4da6ff" stroke-width="3.5" fill="none" stroke-linejoin="round" stroke-linecap="butt" /><path d="M4.5,16L4.5,47.5M4.5,17.5L17.5,23.5L17.5,40.5L33.5,48L33.5,61" stroke="#3d5284" stroke-width="3.8" fill="none" stroke-linejoin="round" stroke-linecap="butt" /></svg>
<span class="t" style="left:1891.7px;top:187.9px;font-size:21.8px;color:#333;transform:scaleX(1.0683);">Offset</span>
<svg class="a" style="left:1971px;top:114px;overflow:visible;" width="66" height="66" viewBox="0 0 66 66"><path d="M17.5,1.5L0.8999999999999986,8.3L0.8999999999999986,29.5L17.5,36.3L34.1,29.5L34.1,8.3ZM0.8999999999999986,8.3L17.5,15.1L34.1,8.3M17.5,15.1L17.5,36.3" stroke="#4da6ff" stroke-width="3.2" fill="none" stroke-linejoin="round" stroke-linecap="butt" /><path d="M6.5,13L6.5,34M12,15.5L12,36.5M23,15.5L23,36.5M28.5,13L28.5,34" stroke="#4da6ff" stroke-width="2.6" fill="none" stroke-linejoin="round" stroke-linecap="butt" /><circle cx="17.5" cy="5" r="1.3" fill="#4da6ff"/><circle cx="11" cy="8" r="1.3" fill="#4da6ff"/><circle cx="24" cy="8" r="1.3" fill="#4da6ff"/><circle cx="17.5" cy="11" r="1.3" fill="#4da6ff"/><path d="M45.5,30L29.0,37L29.0,56.5L45.5,63.5L62.0,56.5L62.0,37ZM29.0,37L45.5,44L62.0,37M45.5,44L45.5,63.5" stroke="#3d5284" stroke-width="3.7" fill="none" stroke-linejoin="round" stroke-linecap="butt" /><path d="M42,4.5Q57,3 58.5,19" stroke="#4da6ff" stroke-width="3.4" fill="none"/><path d="M52.5,17.5L64.5,17.5L58.5,25.5Z" fill="#4da6ff"/></svg>
<span class="t" style="left:1961.6px;top:187.9px;font-size:21.8px;color:#333;transform:scaleX(1.0717);">Simplify</span>
<svg class="a" style="left:2084px;top:114px;overflow:visible;" width="66" height="66" viewBox="0 0 66 66"><path d="M30,1.8L1.8000000000000007,14.200000000000001L1.8000000000000007,50.800000000000004L30,63.2L58.2,50.800000000000004L58.2,14.200000000000001Z" stroke="#4da6ff" stroke-width="3.4" fill="none" stroke-linejoin="round" stroke-linecap="butt" /><path d="M1.8,14.2L16,20.5M58.2,14.2L44,20.5" stroke="#4da6ff" stroke-width="3.4" fill="none" stroke-linejoin="round" stroke-linecap="butt" /><path d="M17.5,15L17.5,41Q17.5,46 30,46Q42.5,46 42.5,41L42.5,15Z" fill="#4da6ff"/><path d="M17.5,15L17.5,41Q18,45.5 26,46" stroke="#3d5284" stroke-width="4" fill="none" stroke-linejoin="round" stroke-linecap="butt" /><ellipse cx="30" cy="15" rx="12.5" ry="5.5" stroke="#3d5284" stroke-width="4" fill="#4da6ff"/><path d="M46,29L27,48L33,66L66,66L66,40Z" fill="#fff"/><path d="M46,31L46,63M30,47L62,47" stroke="#4da6ff" stroke-width="3.4"/><path d="M46,27.5L51.5,35L40.5,35ZM46,66.5L51.5,59L40.5,59ZM26.5,47L34,41.5L34,52.5ZM65.5,47L58,41.5L58,52.5Z" fill="#4da6ff"/></svg>
<span class="t" style="left:2061.0px;top:187.9px;font-size:21.8px;color:#333;transform:scaleX(1.0380);">Translation</span>
<svg class="a" style="left:2188px;top:114px;overflow:visible;" width="66" height="66" viewBox="0 0 66 66"><path d="M30,1.8L1.8000000000000007,14.200000000000001L1.8000000000000007,50.800000000000004L30,63.2L58.2,50.800000000000004L58.2,14.200000000000001Z" stroke="#4da6ff" stroke-width="3.4" fill="none" stroke-linejoin="round" stroke-linecap="butt" /><path d="M1.8,14.2L16,20.5M58.2,14.2L44,20.5" stroke="#4da6ff" stroke-width="3.4" fill="none" stroke-linejoin="round" stroke-linecap="butt" /><path d="M17.5,15L17.5,41Q17.5,46 30,46Q42.5,46 42.5,41L42.5,15Z" fill="#4da6ff"/><path d="M17.5,15L17.5,41Q18,45.5 26,46" stroke="#3d5284" stroke-width="4" fill="none" stroke-linejoin="round" stroke-linecap="butt" /><ellipse cx="30" cy="15" rx="12.5" ry="5.5" stroke="#3d5284" stroke-width="4" fill="#4da6ff"/><circle cx="47.5" cy="48" r="18.5" fill="#fff"/><path d="M34.5,49A13,13 0 1 0 42,36.2" stroke="#4da6ff" stroke-width="3.6" fill="none"/><path d="M28,51L34.8,41.5L41.5,51Z" fill="#4da6ff"/></svg>
<span class="t" style="left:2175.9px;top:187.9px;font-size:21.8px;color:#333;transform:scaleX(1.0796);">Rotation</span>
<svg class="a" style="left:2271px;top:114px;overflow:visible;" width="66" height="66" viewBox="0 0 66 66"><path d="M30,1.8L1.8000000000000007,14.200000000000001L1.8000000000000007,50.800000000000004L30,63.2L58.2,50.800000000000004L58.2,14.200000000000001Z" stroke="#4da6ff" stroke-width="3.4" fill="none" stroke-linejoin="round" stroke-linecap="butt" /><path d="M1.8,14.2L16,20.5M58.2,14.2L44,20.5" stroke="#4da6ff" stroke-width="3.4" fill="none" stroke-linejoin="round" stroke-linecap="butt" /><path d="M17.5,15L17.5,41Q17.5,46 30,46Q42.5,46 42.5,41L42.5,15Z" fill="#4da6ff"/><path d="M17.5,15L17.5,41Q18,45.5 26,46" stroke="#3d5284" stroke-width="4" fill="none" stroke-linejoin="round" stroke-linecap="butt" /><ellipse cx="30" cy="15" rx="12.5" ry="5.5" stroke="#3d5284" stroke-width="4" fill="#4da6ff"/><path d="M24,30L66,30L66,66L24,66Z" fill="#fff"/><rect x="44" y="32" width="3.8" height="32" fill="#4da6ff"/><path d="M28,34.5L40,47L28,59.5Z" fill="#4da6ff"/><path d="M64,34.5L52,47L64,59.5Z" fill="#4da6ff"/></svg>
<span class="t" style="left:2269.3px;top:187.9px;font-size:21.8px;color:#333;transform:scaleX(1.1553);">Mirror</span>
<svg class="a" style="left:2356px;top:114px;overflow:visible;" width="66" height="66" viewBox="0 0 66 66"><path d="M1.8,12L22,22L42.8,12M22,22L22,47" stroke="#4da6ff" stroke-width="3.3" fill="none" stroke-linejoin="round" stroke-linecap="butt" /><circle cx="42.5" cy="42.5" r="19.5" stroke="#4da6ff" stroke-width="3.7" fill="none"/><ellipse cx="42.5" cy="42.5" rx="8.8" ry="19.5" stroke="#4da6ff" stroke-width="3.2" fill="none"/><path d="M23.6,46.8Q42.5,52.2 61.4,46.8" stroke="#4da6ff" stroke-width="3.2" fill="none"/><path d="M42.8,22.5L42.8,11.5L22,1.8L1.8,11.5L1.8,37.5L22,47.5" stroke="#3d5284" stroke-width="3.8" fill="none" stroke-linejoin="round" stroke-linecap="butt" /><path d="M42.8,23A19.5,19.5 0 1 1 23,43" stroke="#3d5284" stroke-width="3.8" fill="none"/></svg>
<span class="t" style="left:2359.6px;top:187.9px;font-size:21.8px;color:#333;transform:scaleX(1.0985);">Unite</span>
<svg class="a" style="left:2430px;top:114px;overflow:visible;" width="66" height="66" viewBox="0 0 66 66"><path d="M16,22L30,16L44,22L44,40L30,46L16,40Z" fill="#4da6ff"/><path d="M30,1.8L1.8,13.5L1.8,50.5L30,62.2L58.2,50.5L58.2,13.5ZM30,62.2L30,49" stroke="#3d5284" stroke-width="3.9" fill="none" stroke-linejoin="round" stroke-linecap="butt" /><path d="M1.8,13.5L14,19M58.2,13.5L46,19M14,19L30,12L46,19L46,27M14,19L14,41.5L30,49L46,41.5M30,12L30,18" stroke="#3d5284" stroke-width="3.6" fill="none" stroke-linejoin="round" stroke-linecap="butt" /><path d="M22,27L36,21L50,27L50,40L36,46L22,40Z" fill="#fff" stroke="#3d5284" stroke-width="3.6" stroke-linejoin="round"/><path d="M22,27L36,33L50,27M36,33L36,46" stroke="#3d5284" stroke-width="3.2" fill="none" stroke-linejoin="round" stroke-linecap="butt" /></svg>
<span class="t" style="left:2428.9px;top:187.9px;font-size:21.8px;color:#333;transform:scaleX(1.0245);">Cavity</span>
<svg class="a" style="left:2513px;top:114px;overflow:visible;" width="66" height="66" viewBox="0 0 66 66"><path d="M22,1.8L1.5,11.100000000000001L1.5,38.6L22,47.900000000000006L42.5,38.6L42.5,11.100000000000001ZM1.5,11.100000000000001L22,20.400000000000002L42.5,11.100000000000001M22,20.400000000000002L22,47.900000000000006" stroke="#4da6ff" stroke-width="3.3" fill="none" stroke-linejoin="round" stroke-linecap="butt" /><circle cx="42.5" cy="42.5" r="19.5" stroke="#4da6ff" stroke-width="3.7" fill="none"/><ellipse cx="42.5" cy="42.5" rx="8.8" ry="19.5" stroke="#4da6ff" stroke-width="3.2" fill="none"/><path d="M23.6,46.8Q42.5,52.2 61.4,46.8" stroke="#4da6ff" stroke-width="3.2" fill="none"/><path d="M22,46.5L22,42Q23,25 42.5,23L42.5,37.5Z" fill="none" stroke="#3d5284" stroke-width="3.8" stroke-linejoin="round"/></svg>
<span class="t" style="left:2499.5px;top:187.9px;font-size:21.8px;color:#333;transform:scaleX(1.0646);">Intersect</span>
<svg class="a" style="left:2597px;top:114px;overflow:visible;" width="66" height="66" viewBox="0 0 66 66"><path d="M34,7.5L9,17.5L9,49L22,54.5M34,7.5L50,14" stroke="#4da6ff" stroke-width="3.3" fill="none" stroke-linejoin="round" stroke-linecap="butt" /><path d="M21.5,27L34.5,31.5L58,21L58,49L34.5,60.5L21.5,54.5Z" fill="#fff"/><path d="M21.5,27L34.5,31.5L58,21M34.5,31.5L34.5,60.5M21.5,25L21.5,54.5L34.5,60.5L58,49L58,19L48,14.5" stroke="#3d5284" stroke-width="3.8" fill="none" stroke-linejoin="round" stroke-linecap="butt" /><path d="M0.5,40.5L21.5,31.5L21.5,23.5L51.5,10.5" stroke="#d9363e" stroke-width="3.6" fill="none"/><path d="M56.5,16L63.5,13" stroke="#d9363e" stroke-width="3.6"/></svg>
<span class="t" style="left:2610.7px;top:187.9px;font-size:21.8px;color:#333;transform:scaleX(1.0510);">Cut</span>
<span class="t" style="left:2594.0px;top:214.5px;font-size:21.8px;color:#333;transform:scaleX(1.0786);">bodies</span>
<div class="a" style="left:120.7px;top:116px;width:1.5px;height:121px;background:#d4d4d4;"></div>
<div class="a" style="left:1083px;top:116px;width:1.5px;height:121px;background:#d4d4d4;"></div>
<div class="a" style="left:1335px;top:116px;width:1.5px;height:121px;background:#d4d4d4;"></div>
<div class="a" style="left:1715px;top:116px;width:1.5px;height:121px;background:#d4d4d4;"></div>
<div class="a" style="left:671.2px;top:110px;width:1.5px;height:167px;background:#d4d4d4;"></div>
<div class="a" style="left:2050.6px;top:110px;width:1.5px;height:167px;background:#d4d4d4;"></div>
<div class="a" style="left:2343.7px;top:110px;width:1.5px;height:167px;background:#d4d4d4;"></div>
<div class="a" style="left:2669.7px;top:110px;width:1.5px;height:167px;background:#d4d4d4;"></div>
<span class="t" style="left:305.0px;top:250.3px;font-size:21.8px;color:#333;transform:scaleX(1.0188);">Forms</span>
<span class="t" style="left:1305.0px;top:250.3px;font-size:21.8px;color:#333;transform:scaleX(1.0649);">Operations</span>
<span class="t" style="left:2161.5px;top:250.3px;font-size:21.8px;color:#333;transform:scaleX(1.0543);">Pattern</span>
<span class="t" style="left:2466.0px;top:250.3px;font-size:21.8px;color:#333;transform:scaleX(1.0439);">Boolean</span>
<div class="a" style="left:0px;top:288px;width:5.6px;height:247px;background:#d0d0d0;"></div>
<svg class="a" style="left:17px;top:288px;" width="34" height="32" viewBox="0 0 34 32"><path d="M4.5,2L4.5,22" stroke="#3d8fe0" stroke-width="1.6"/><path d="M4.5,0L1.8,5L7.2,5Z" fill="#3d8fe0"/><circle cx="4.5" cy="22.5" r="2.6" fill="none" stroke="#3d5284" stroke-width="1.8"/><path d="M7,22.5L17,15.5L32,22.5L22,29Z" fill="#fff" stroke="#3d5284" stroke-width="1.3"/><path d="M7,22L17,17" stroke="#3aa845" stroke-width="1.6"/><path d="M7,23L20,28.5" stroke="#d9363e" stroke-width="1.6"/><path d="M19,14.5L14.5,15L17.5,18.5Z" fill="#3aa845"/><path d="M22.5,29.5L18,29.5L20,25.5Z" fill="#d9363e"/></svg>
<span class="t" style="left:44.5px;top:323px;font-size:24px;color:#222;transform:rotate(90deg);transform-origin:0 0;width:214px;letter-spacing:-0.15px">Workplane manager</span>
<span class="t" style="left:57.4px;top:296.0px;font-size:35.5px;color:#333;transform:scaleX(1.0475);">Options - Edit cylindrical f...</span>
<svg class="a" style="left:528px;top:299px;" width="20" height="25" viewBox="0 0 20 25"><rect x="1.5" y="1.5" width="16" height="4.6" rx="2.3" fill="none" stroke="#555" stroke-width="1.6"/><rect x="1.5" y="7.2" width="16" height="4.6" rx="2.3" fill="none" stroke="#555" stroke-width="1.6"/><rect x="1.5" y="12.9" width="16" height="4.6" rx="2.3" fill="none" stroke="#555" stroke-width="1.6"/><rect x="1.5" y="18.6" width="16" height="4.6" rx="2.3" fill="none" stroke="#555" stroke-width="1.6"/></svg>
<svg class="a" style="left:566px;top:301px;" width="18" height="22" viewBox="0 0 18 22"><path d="M3.5,2L12.5,2M5,2L5,9.5M11,2L11,9.5" stroke="#666" stroke-width="2.4" fill="none"/><path d="M1,10.5L15,10.5" stroke="#666" stroke-width="2.8"/><path d="M8,11L8,19" stroke="#666" stroke-width="2.2"/></svg>
<svg class="a" style="left:601px;top:302px;" width="20" height="19" viewBox="0 0 20 19"><path d="M2,2L17,16.5M17,2L2,16.5" stroke="#666" stroke-width="3.2"/></svg>
<svg class="a" style="left:79px;top:358px;" width="50" height="50" viewBox="0 0 50 50"><circle cx="25" cy="25" r="24" fill="#4da6ff"/><path d="M14.5,26L22,34L36.5,18.5" stroke="#fff" stroke-width="3.6" fill="none"/></svg>
<svg class="a" style="left:139px;top:358px;" width="50" height="50" viewBox="0 0 50 50"><circle cx="25" cy="25" r="24" fill="#d94040"/><path d="M15,15L35,35M35,15L15,35" stroke="#fff" stroke-width="4.2"/></svg>
<div class="a" style="left:62px;top:433px;width:8px;height:157.5px;background:#4da6ff;"></div>
<span class="t" style="left:115.6px;top:432.8px;font-size:23.3px;color:#333;transform:scaleX(1.0296);">Cylindrical faces to</span>
<span class="t" style="left:274.2px;top:465.4px;font-size:23.3px;color:#333;transform:scaleX(1.1133);">edit</span>
<svg class="a" style="left:342px;top:434px;" width="46" height="46" viewBox="0 0 46 46"><circle cx="23" cy="22.7" r="20.5" fill="#fff" stroke="#4da6ff" stroke-width="2.8"/><path d="M8,22L19,33.5L37,12.5L37,17L19,38L8,26.5Z" fill="none" stroke="#4da6ff" stroke-width="1.8" stroke-linejoin="round"/></svg>
<svg class="a" style="left:392px;top:434px;" width="46" height="46" viewBox="0 0 46 46"><circle cx="23" cy="22.7" r="20.5" fill="#fff" stroke="#d0121b" stroke-width="2.8"/><path d="M11,13.5L14,10.5L23,19.5L32,10.5L35,13.5L26,22.7L35,32L32,35L23,26L14,35L11,32L20,22.7Z" fill="none" stroke="#d0121b" stroke-width="1.8" stroke-linejoin="round"/></svg>
<div class="a" style="left:340px;top:483px;width:276px;height:108px;background:#fff;border:1.5px solid #7a7a7a;box-sizing:border-box;"></div>
<span class="t" style="left:351.3px;top:492.7px;font-size:23.3px;color:#000;transform:scaleX(0.9753);">Face 155547</span>
<svg class="a" style="left:577px;top:484px;" width="28" height="34" viewBox="0 0 28 34"><path d="M10,4.5L10,1.5L17.5,1.5L17.5,4.5" stroke="#c4c4c4" stroke-width="1.8" fill="none"/><rect x="1.5" y="4.5" width="24.5" height="4.5" fill="none" stroke="#c4c4c4" stroke-width="1.8"/><path d="M3.5,9.5L3.5,32L24,32L24,9.5" stroke="#c4c4c4" stroke-width="1.8" fill="none"/><path d="M8.5,12.5L8.5,29M13.8,12.5L13.8,29M19,12.5L19,29" stroke="#c4c4c4" stroke-width="1.8"/></svg>
<span class="t" style="left:244.8px;top:609.8px;font-size:23.3px;color:#333;transform:scaleX(0.9907);">Radius</span>
<div class="a" style="left:340px;top:599px;width:190px;height:40.5px;background:#fff;border:1.5px solid #7a7a7a;box-sizing:border-box;"></div>
<span class="t" style="left:348.3px;top:609.1px;font-size:23.3px;color:#333;transform:scaleX(0.9835);">15.75</span>
<div class="a" style="left:496px;top:600.5px;width:32.5px;height:18.5px;background:#f0f0f0;border:1.5px solid #c0c0c0;box-sizing:border-box;"></div>
<div class="a" style="left:496px;top:619.5px;width:32.5px;height:18.5px;background:#f0f0f0;border:1.5px solid #c0c0c0;box-sizing:border-box;"></div>
<svg class="a" style="left:506.5px;top:606px;" width="11" height="7" viewBox="0 0 11 7"><path d="M0,6.5L5.5,0L11,6.5Z" fill="#000"/></svg>
<svg class="a" style="left:506.5px;top:625.5px;" width="11" height="7" viewBox="0 0 11 7"><path d="M0,0L5.5,6.5L11,0Z" fill="#000"/></svg>
<span class="t" style="left:198.5px;top:657.1px;font-size:23.3px;color:#333;transform:scaleX(1.0379);">Operations</span>
<svg class="a" style="left:339.5px;top:652.8px;" width="29" height="29" viewBox="0 0 29 29"><circle cx="14.5" cy="14.5" r="12.3" fill="#fff" stroke="#000" stroke-width="2.4"/><circle cx="14.5" cy="14.5" r="6.2" fill="#000"/></svg>
<span class="t" style="left:374.0px;top:657.1px;font-size:23.3px;color:#333;transform:scaleX(1.0112);">Change radius</span>
<svg class="a" style="left:339.5px;top:692.8px;" width="29" height="29" viewBox="0 0 29 29"><circle cx="14.5" cy="14.5" r="12.3" fill="#fff" stroke="#000" stroke-width="2.4"/></svg>
<span class="t" style="left:373.2px;top:697.1px;font-size:23.3px;color:#333;transform:scaleX(1.0234);">Delete faces</span>
<svg class="a" style="left:339.5px;top:732.8px;" width="29" height="29" viewBox="0 0 29 29"><circle cx="14.5" cy="14.5" r="12.3" fill="#fff" stroke="#000" stroke-width="2.4"/></svg>
<span class="t" style="left:373.1px;top:737.1px;font-size:23.3px;color:#333;transform:scaleX(1.0557);">Highlight faces</span>
<span class="t" style="left:202.1px;top:786.1px;font-size:23.3px;color:#333;transform:scaleX(1.0669);">Min radius</span>
<div class="a" style="left:340px;top:775px;width:190px;height:39.5px;background:#efefef;border:1.5px solid #555;box-sizing:border-box;"></div>
<span class="t" style="left:348.3px;top:785.6px;font-size:23.3px;color:#000;transform:scaleX(0.9835);">15.75</span>
<span class="t" style="left:158.5px;top:834.1px;font-size:23.3px;color:#333;transform:scaleX(1.0123);">Average radius</span>
<div class="a" style="left:340px;top:823px;width:190px;height:39.5px;background:#efefef;border:1.5px solid #555;box-sizing:border-box;"></div>
<span class="t" style="left:348.3px;top:833.6px;font-size:23.3px;color:#000;transform:scaleX(0.9835);">15.75</span>
<span class="t" style="left:198.7px;top:882.1px;font-size:23.3px;color:#333;transform:scaleX(1.0360);">Max radius</span>
<div class="a" style="left:340px;top:871px;width:190px;height:39.5px;background:#efefef;border:1.5px solid #555;box-sizing:border-box;"></div>
<span class="t" style="left:348.3px;top:881.6px;font-size:23.3px;color:#000;transform:scaleX(0.9835);">15.75</span>
<span class="t" style="left:208.0px;top:934.1px;font-size:23.3px;color:#333;transform:scaleX(1.0463);">Automatic</span>
<svg class="a" style="left:339.5px;top:929.5px;" width="27" height="27" viewBox="0 0 27 27"><rect x="1.2" y="1.2" width="24" height="24" fill="#fff" stroke="#000" stroke-width="2.4"/><path d="M5.5,13.5L10.5,19.5L21,6" stroke="#000" stroke-width="2" fill="none"/></svg>
<div class="a" style="left:375px;top:920px;width:142px;height:45.3px;background:#c8c8c8;"></div>
<span class="t" style="left:404.0px;top:933.6px;font-size:23.3px;color:#868686;transform:scaleX(0.9948);">Preview</span>
<div class="a" style="left:78px;top:983px;width:546px;height:129.5px;background:#efefef;border:1.5px solid #8a8a8a;box-sizing:border-box;"></div>
<div class="a" style="left:53.5px;top:2077px;width:576.5px;height:32.5px;background:#f0f0f0;"></div>
<div class="a" style="left:88px;top:2077px;width:505px;height:32.5px;background:#cdcdcd;"></div>
<svg class="a" style="left:63px;top:2086px;" width="14" height="14" viewBox="0 0 14 14"><path d="M10,1.5L4,7L10,12.5" stroke="#555" stroke-width="2.6" fill="none"/></svg>
<svg class="a" style="left:606px;top:2086px;" width="14" height="14" viewBox="0 0 14 14"><path d="M3,1.5L9,7L3,12.5" stroke="#555" stroke-width="2.6" fill="none"/></svg>
<div class="a" style="left:641px;top:282.5px;width:150px;height:39px;background:#fff;border:1.5px solid #aaa;box-sizing:border-box;border-bottom:none;"></div>
<div class="a" style="left:790px;top:320px;width:2996px;height:1.3px;background:#aaa;"></div>
<svg class="a" style="left:648px;top:285px;" width="34" height="34" viewBox="0 0 34 34"><path d="M16.5,1.5L1.5,8.5L1.5,25L16.5,32.5L31.5,25L31.5,8.5ZM1.5,8.5L16.5,15L31.5,8.5M16.5,15L16.5,32.5" fill="#fff" stroke="#4a5a8a" stroke-width="1.3" stroke-dasharray="3.2 1.6"/></svg>
<span class="t" style="left:684.7px;top:293.0px;font-size:22px;color:#1565c8;font-weight:bold;transform:scaleX(1.0222);">Dynamic</span>
<svg class="a" style="left:806px;top:299px;" width="12" height="12" viewBox="0 0 12 12"><path d="M6,0.5L6,11.5M0.5,6L11.5,6" stroke="#333" stroke-width="1.4"/></svg>
<svg class="a" style="left:3758px;top:296.5px;" width="19" height="10" viewBox="0 0 19 10"><path d="M0,0L18,0L9,9.5Z" fill="#777"/></svg>
<svg class="a" style="left:3794px;top:288px;" width="30" height="32" viewBox="0 0 30 32"><path d="M14,1L26,7L26,11L17,25Z" fill="#b0b0b0"/><path d="M2,7L14,1L17,25L2,20Z" fill="#8a8a8a"/><path d="M14,1L26,7L17,10Z" fill="#d0d0d0"/><path d="M5,8L26,9L17,26Z" fill="#1cc0e8"/><rect x="17" y="17" width="12" height="12" fill="#7ac143"/></svg><span class="t" style="left:3813.2px;top:303.3px;font-size:13px;color:#fff;font-weight:bold;">e</span>
<span class="t" style="left:3817.5px;top:324px;font-size:23.6px;color:#222;transform:rotate(90deg);transform-origin:0 0;">Help</span>
<div class="a" style="left:3834px;top:288px;width:6px;height:82px;background:#c8c8c8;"></div>
<div class="a" style="left:636px;top:320px;width:3150.5px;height:1790px;background:#fff;border:1.3px solid #a0a0a0;box-sizing:border-box;"></div>
<div class="a" style="left:641px;top:320px;width:150px;height:1.5px;background:#fff;"></div>
<div class="a" style="left:632.5px;top:283px;width:2px;height:1826px;background:#f4f4f4;"></div>
<div class="a" style="left:641px;top:323.5px;width:3140px;height:1782px;background:#f0f0f0;"></div>
<div class="a" style="left:641px;top:323.5px;width:3139px;height:1.2px;background:#a8a8a8;"></div>
<div class="a" style="left:641px;top:323.5px;width:1.2px;height:1781px;background:#a8a8a8;"></div>
<div class="a" style="left:642px;top:324.6px;width:3138px;height:1.5px;background:#5a5a5a;"></div>
<div class="a" style="left:642px;top:324.6px;width:1.5px;height:1780px;background:#5a5a5a;"></div>
<svg class="a" style="left:0;top:0;overflow:hidden" width="3840" height="2160" viewBox="0 0 3840 2160"><defs><linearGradient id="bg" gradientUnits="userSpaceOnUse" x1="0" y1="325" x2="0" y2="2104"><stop offset="0" stop-color="#ffffff"/><stop offset="0.35" stop-color="#f5f5f5"/><stop offset="1" stop-color="#e1e1e1"/></linearGradient><linearGradient id="sideL" gradientUnits="userSpaceOnUse" x1="643" y1="0" x2="1230" y2="0"><stop offset="0" stop-color="#00385a"/><stop offset="0.37" stop-color="#00466e"/><stop offset="0.463" stop-color="#01486f"/><stop offset="0.608" stop-color="#003656"/><stop offset="0.745" stop-color="#012c47"/><stop offset="0.89" stop-color="#002a43"/><stop offset="0.93" stop-color="#012e4a"/><stop offset="1" stop-color="#002a42"/></linearGradient><linearGradient id="slopeL" gradientUnits="userSpaceOnUse" x1="643" y1="1300" x2="820" y2="1250"><stop offset="0" stop-color="#0d83ca"/><stop offset="1" stop-color="#0a7ac0"/></linearGradient><linearGradient id="blendL" gradientUnits="userSpaceOnUse" x1="0" y1="1491" x2="0" y2="1524"><stop offset="0" stop-color="#0b7cc2"/><stop offset="0.45" stop-color="#2a9be2"/><stop offset="1" stop-color="#0a6eae"/></linearGradient><linearGradient id="angF" gradientUnits="userSpaceOnUse" x1="1230" y1="1200" x2="1700" y2="1250"><stop offset="0" stop-color="#01446c"/><stop offset="0.15" stop-color="#00466e"/><stop offset="0.55" stop-color="#03558a"/><stop offset="1" stop-color="#0466a4"/></linearGradient><linearGradient id="boss1s" gradientUnits="userSpaceOnUse" x1="1389" y1="0" x2="1740" y2="0"><stop offset="0" stop-color="#05588e"/><stop offset="0.3" stop-color="#04466f"/><stop offset="0.55" stop-color="#03304f"/><stop offset="0.75" stop-color="#002a42"/><stop offset="1" stop-color="#002a42"/></linearGradient><linearGradient id="hole1" gradientUnits="userSpaceOnUse" x1="1499" y1="1090" x2="1640" y2="1120"><stop offset="0" stop-color="#002a42"/><stop offset="0.33" stop-color="#002a42"/><stop offset="0.65" stop-color="#004168"/><stop offset="1" stop-color="#005e92"/></linearGradient><linearGradient id="cham1" gradientUnits="userSpaceOnUse" x1="1490" y1="1060" x2="1650" y2="1110"><stop offset="0" stop-color="#00395d"/><stop offset="0.4" stop-color="#04598f"/><stop offset="0.8" stop-color="#1a8ad2"/><stop offset="1" stop-color="#0a7cc2"/></linearGradient><linearGradient id="slope2" gradientUnits="userSpaceOnUse" x1="2700" y1="860" x2="2830" y2="760"><stop offset="0" stop-color="#0b7dc3"/><stop offset="0.5" stop-color="#1389d0"/><stop offset="1" stop-color="#0b7dc3"/></linearGradient><linearGradient id="slope3" gradientUnits="userSpaceOnUse" x1="3200" y1="690" x2="3290" y2="560"><stop offset="0" stop-color="#0a7bc0"/><stop offset="0.5" stop-color="#1086cc"/><stop offset="1" stop-color="#0674b8"/></linearGradient><linearGradient id="boss2s" gradientUnits="userSpaceOnUse" x1="2806" y1="0" x2="3120" y2="0"><stop offset="0" stop-color="#055c93"/><stop offset="0.3" stop-color="#044f80"/><stop offset="0.6" stop-color="#033558"/><stop offset="0.85" stop-color="#002a42"/><stop offset="1" stop-color="#002a42"/></linearGradient><linearGradient id="hole2" gradientUnits="userSpaceOnUse" x1="2905" y1="660" x2="3035" y2="700"><stop offset="0" stop-color="#002a42"/><stop offset="0.33" stop-color="#002a42"/><stop offset="0.7" stop-color="#004670"/><stop offset="1" stop-color="#005e92"/></linearGradient><linearGradient id="cham2" gradientUnits="userSpaceOnUse" x1="2900" y1="640" x2="3040" y2="690"><stop offset="0" stop-color="#03406a"/><stop offset="0.5" stop-color="#04598f"/><stop offset="0.8" stop-color="#1a8ad2"/><stop offset="1" stop-color="#0a72b4"/></linearGradient><linearGradient id="headS" gradientUnits="userSpaceOnUse" x1="3335" y1="0" x2="3650" y2="0"><stop offset="0" stop-color="#03426c"/><stop offset="0.35" stop-color="#04507f"/><stop offset="0.7" stop-color="#033b62"/><stop offset="1" stop-color="#022c48"/></linearGradient><linearGradient id="band1" gradientUnits="userSpaceOnUse" x1="2000" y1="951" x2="2010.5" y2="995.8"><stop offset="0" stop-color="#0670b2"/><stop offset="0.25" stop-color="#0564a0"/><stop offset="0.55" stop-color="#044470"/><stop offset="0.85" stop-color="#02233b"/><stop offset="1" stop-color="#011522"/></linearGradient><linearGradient id="lowb" gradientUnits="userSpaceOnUse" x1="1760" y1="1160" x2="1800" y2="1240"><stop offset="0" stop-color="#1c88ce"/><stop offset="0.6" stop-color="#0f7abf"/><stop offset="1" stop-color="#05609a"/></linearGradient><linearGradient id="band2" gradientUnits="userSpaceOnUse" x1="2010.5" y1="995.8" x2="2017" y2="1023.2"><stop offset="0" stop-color="#021c30"/><stop offset="0.35" stop-color="#03375c"/><stop offset="1" stop-color="#0464a1"/></linearGradient><linearGradient id="band1e" gradientUnits="userSpaceOnUse" x1="2455" y1="0" x2="2600" y2="0"><stop offset="0" stop-color="#04507f"/><stop offset="0.3" stop-color="#0670b2"/><stop offset="1" stop-color="#0674b8"/></linearGradient><linearGradient id="band2e" gradientUnits="userSpaceOnUse" x1="2462" y1="0" x2="2560" y2="0"><stop offset="0" stop-color="#04507f"/><stop offset="0.3" stop-color="#0670b2"/><stop offset="1" stop-color="#0676ba"/></linearGradient><linearGradient id="band1s" gradientUnits="userSpaceOnUse" x1="1747" y1="1020" x2="1762" y2="1062"><stop offset="0" stop-color="#0670b2"/><stop offset="0.25" stop-color="#0564a0"/><stop offset="0.55" stop-color="#044470"/><stop offset="0.85" stop-color="#02233b"/><stop offset="1" stop-color="#011522"/></linearGradient><linearGradient id="cyhole" gradientUnits="userSpaceOnUse" x1="860" y1="0" x2="1220" y2="0"><stop offset="0" stop-color="#033e56"/><stop offset="0.3" stop-color="#03435b"/><stop offset="0.34" stop-color="#044a62"/><stop offset="0.6" stop-color="#046985"/><stop offset="0.85" stop-color="#057fa3"/><stop offset="1" stop-color="#0586ab"/></linearGradient><linearGradient id="redhole" gradientUnits="userSpaceOnUse" x1="3400" y1="500" x2="3620" y2="640"><stop offset="0" stop-color="#5e0000"/><stop offset="0.25" stop-color="#8a0000"/><stop offset="0.6" stop-color="#c40000"/><stop offset="1" stop-color="#ea0000"/></linearGradient><filter id="glow" filterUnits="userSpaceOnUse" x="600" y="300" width="3300" height="1900"><feGaussianBlur stdDeviation="9"/></filter><filter id="glow2" filterUnits="userSpaceOnUse" x="600" y="300" width="3300" height="1900"><feGaussianBlur stdDeviation="4"/></filter><clipPath id="vp"><rect x="643.8" y="325.8" width="3136" height="1778.2"/></clipPath><clipPath id="silc"><path d="M643.0,1167.2C689.0,1153.8 735.0,1140.4 781.0,1127.0C827.2,1113.5 872.8,1098.1 919.5,1086.4C930.3,1083.7 941.1,1081.1 952.0,1078.6C962.9,1076.1 973.8,1073.9 984.7,1071.7C1020.2,1064.6 1056.2,1059.8 1092.0,1054.0C1127.7,1048.2 1163.3,1042.5 1199.0,1036.8C1214.0,1040.0 1228.9,1044.1 1244.0,1047.0C1266.1,1051.3 1288.5,1054.1 1311.0,1056.0C1340.6,1058.5 1370.3,1057.3 1400.0,1058.0L1683.7,1006.5C1769.5,986.8 1855.6,968.4 1941.0,947.3C2037.1,923.6 2132.9,898.4 2228.0,870.9C2294.1,851.8 2359.5,830.3 2425.4,810.5C2493.2,790.1 2561.1,770.4 2629.0,750.3C2644.2,739.7 2659.8,729.8 2674.5,718.5C2687.4,708.5 2700.0,698.0 2712.0,687.0C2724.2,675.9 2735.3,663.7 2747.0,652.0L2820.0,633.0L3027.0,588.0L3138.5,557.0C3152.3,551.3 3166.6,546.6 3180.0,540.0C3192.1,534.1 3203.3,526.7 3215.0,520.0L3248.5,510.0L3256.0,481.5C3263.0,471.0 3267.7,458.5 3277.0,450.0C3290.5,437.6 3310.3,434.0 3328.0,429.0C3354.1,421.6 3381.8,419.1 3409.0,420.0C3429.9,420.7 3450.5,424.8 3471.0,429.0C3490.6,433.1 3510.1,438.0 3529.0,444.5C3548.9,451.4 3568.2,460.0 3587.0,469.6C3607.1,479.9 3627.1,490.7 3645.0,504.4C3658.6,514.8 3671.6,526.2 3683.0,539.0C3694.8,552.2 3706.1,566.2 3714.0,582.0C3721.9,597.6 3728.6,614.6 3730.0,632.0C3730.5,638.3 3730.8,644.7 3730.0,651.0C3728.4,663.5 3720.7,674.3 3716.0,686.0L3602.0,883.0C3597.0,892.0 3593.3,901.8 3587.0,910.0C3578.6,920.9 3567.9,930.1 3556.0,937.0C3546.4,942.5 3535.7,946.2 3525.0,949.0C3507.5,953.6 3489.0,953.9 3471.0,953.0C3450.0,952.0 3429.4,946.1 3409.0,941.0C3383.1,934.5 3358.3,924.3 3333.0,916.0C3282.0,926.5 3229.5,931.2 3180.0,947.5C3168.9,951.1 3157.7,954.6 3147.0,959.3C3138.1,963.2 3129.4,967.5 3121.0,972.5C3111.8,978.0 3102.7,983.7 3094.7,990.8C3084.5,999.9 3076.5,1011.2 3068.5,1022.3C3063.9,1028.7 3059.8,1035.4 3055.4,1042.0L2996.0,1060.7C2985.3,1066.5 2975.4,1073.8 2964.0,1078.0C2952.8,1082.2 2940.7,1083.1 2929.0,1085.7L2850.0,1117.4L2826.0,1125.0C2810.0,1119.7 2794.6,1112.1 2778.0,1109.0C2767.5,1107.1 2756.7,1107.0 2746.0,1106.0C2611.3,1150.7 2474.3,1188.8 2342.0,1240.0C2314.6,1250.6 2287.4,1261.9 2260.0,1272.7C2167.0,1309.4 2072.8,1342.8 1980.0,1380.0C1920.6,1403.8 1861.0,1427.4 1802.4,1453.3C1769.1,1468.0 1735.8,1483.0 1703.0,1498.8C1673.7,1512.9 1644.2,1526.6 1616.0,1542.7C1603.4,1549.9 1591.1,1557.4 1578.8,1565.0C1557.8,1577.9 1536.5,1590.3 1516.6,1604.8C1502.1,1615.4 1488.4,1627.1 1474.4,1638.4C1451.3,1657.2 1430.5,1679.0 1406.0,1696.0C1376.5,1716.5 1343.1,1730.8 1311.0,1747.0C1281.8,1761.7 1252.6,1776.4 1222.5,1789.0C1203.7,1796.9 1184.9,1804.8 1165.5,1811.0C1148.3,1816.5 1130.8,1821.4 1113.0,1825.0C1097.2,1828.2 1081.1,1830.6 1065.0,1832.0C1047.7,1833.5 1030.3,1834.0 1013.0,1833.0C994.2,1831.9 975.4,1829.2 957.0,1825.0C942.1,1821.6 927.9,1815.6 913.0,1812.0C901.6,1809.2 889.7,1808.4 878.5,1805.0C868.4,1802.0 858.8,1797.4 849.0,1793.5C835.3,1788.1 821.7,1782.5 808.0,1777.0C789.3,1769.4 770.8,1761.2 752.0,1754.0C733.5,1746.9 715.2,1738.9 696.0,1734.0C678.6,1729.5 660.7,1728.0 643.0,1725.0Z"/></clipPath></defs><g clip-path="url(#vp)"><rect x="643" y="325" width="3138" height="1780" fill="url(#bg)"/><path d="M643.0,1167.2C689.0,1153.8 735.0,1140.4 781.0,1127.0C827.2,1113.5 872.8,1098.1 919.5,1086.4C930.3,1083.7 941.1,1081.1 952.0,1078.6C962.9,1076.1 973.8,1073.9 984.7,1071.7C1020.2,1064.6 1056.2,1059.8 1092.0,1054.0C1127.7,1048.2 1163.3,1042.5 1199.0,1036.8C1214.0,1040.0 1228.9,1044.1 1244.0,1047.0C1266.1,1051.3 1288.5,1054.1 1311.0,1056.0C1340.6,1058.5 1370.3,1057.3 1400.0,1058.0L1683.7,1006.5C1769.5,986.8 1855.6,968.4 1941.0,947.3C2037.1,923.6 2132.9,898.4 2228.0,870.9C2294.1,851.8 2359.5,830.3 2425.4,810.5C2493.2,790.1 2561.1,770.4 2629.0,750.3C2644.2,739.7 2659.8,729.8 2674.5,718.5C2687.4,708.5 2700.0,698.0 2712.0,687.0C2724.2,675.9 2735.3,663.7 2747.0,652.0L2820.0,633.0L3027.0,588.0L3138.5,557.0C3152.3,551.3 3166.6,546.6 3180.0,540.0C3192.1,534.1 3203.3,526.7 3215.0,520.0L3248.5,510.0L3256.0,481.5C3263.0,471.0 3267.7,458.5 3277.0,450.0C3290.5,437.6 3310.3,434.0 3328.0,429.0C3354.1,421.6 3381.8,419.1 3409.0,420.0C3429.9,420.7 3450.5,424.8 3471.0,429.0C3490.6,433.1 3510.1,438.0 3529.0,444.5C3548.9,451.4 3568.2,460.0 3587.0,469.6C3607.1,479.9 3627.1,490.7 3645.0,504.4C3658.6,514.8 3671.6,526.2 3683.0,539.0C3694.8,552.2 3706.1,566.2 3714.0,582.0C3721.9,597.6 3728.6,614.6 3730.0,632.0C3730.5,638.3 3730.8,644.7 3730.0,651.0C3728.4,663.5 3720.7,674.3 3716.0,686.0L3602.0,883.0C3597.0,892.0 3593.3,901.8 3587.0,910.0C3578.6,920.9 3567.9,930.1 3556.0,937.0C3546.4,942.5 3535.7,946.2 3525.0,949.0C3507.5,953.6 3489.0,953.9 3471.0,953.0C3450.0,952.0 3429.4,946.1 3409.0,941.0C3383.1,934.5 3358.3,924.3 3333.0,916.0C3282.0,926.5 3229.5,931.2 3180.0,947.5C3168.9,951.1 3157.7,954.6 3147.0,959.3C3138.1,963.2 3129.4,967.5 3121.0,972.5C3111.8,978.0 3102.7,983.7 3094.7,990.8C3084.5,999.9 3076.5,1011.2 3068.5,1022.3C3063.9,1028.7 3059.8,1035.4 3055.4,1042.0L2996.0,1060.7C2985.3,1066.5 2975.4,1073.8 2964.0,1078.0C2952.8,1082.2 2940.7,1083.1 2929.0,1085.7L2850.0,1117.4L2826.0,1125.0C2810.0,1119.7 2794.6,1112.1 2778.0,1109.0C2767.5,1107.1 2756.7,1107.0 2746.0,1106.0C2611.3,1150.7 2474.3,1188.8 2342.0,1240.0C2314.6,1250.6 2287.4,1261.9 2260.0,1272.7C2167.0,1309.4 2072.8,1342.8 1980.0,1380.0C1920.6,1403.8 1861.0,1427.4 1802.4,1453.3C1769.1,1468.0 1735.8,1483.0 1703.0,1498.8C1673.7,1512.9 1644.2,1526.6 1616.0,1542.7C1603.4,1549.9 1591.1,1557.4 1578.8,1565.0C1557.8,1577.9 1536.5,1590.3 1516.6,1604.8C1502.1,1615.4 1488.4,1627.1 1474.4,1638.4C1451.3,1657.2 1430.5,1679.0 1406.0,1696.0C1376.5,1716.5 1343.1,1730.8 1311.0,1747.0C1281.8,1761.7 1252.6,1776.4 1222.5,1789.0C1203.7,1796.9 1184.9,1804.8 1165.5,1811.0C1148.3,1816.5 1130.8,1821.4 1113.0,1825.0C1097.2,1828.2 1081.1,1830.6 1065.0,1832.0C1047.7,1833.5 1030.3,1834.0 1013.0,1833.0C994.2,1831.9 975.4,1829.2 957.0,1825.0C942.1,1821.6 927.9,1815.6 913.0,1812.0C901.6,1809.2 889.7,1808.4 878.5,1805.0C868.4,1802.0 858.8,1797.4 849.0,1793.5C835.3,1788.1 821.7,1782.5 808.0,1777.0C789.3,1769.4 770.8,1761.2 752.0,1754.0C733.5,1746.9 715.2,1738.9 696.0,1734.0C678.6,1729.5 660.7,1728.0 643.0,1725.0Z" fill="#002a42" stroke="none" stroke-width="0" stroke-linejoin="round" /><path d="M643.0,1493.0L800.0,1490.0C803.3,1493.0 806.5,1496.2 810.0,1499.0C818.3,1505.7 827.4,1511.4 837.0,1516.0C851.1,1522.8 866.9,1525.0 882.0,1529.0C900.5,1533.9 919.1,1538.6 938.0,1542.0C956.5,1545.4 975.2,1548.1 994.0,1549.4C1012.6,1550.7 1031.4,1550.9 1050.0,1550.0C1068.8,1549.1 1087.5,1547.3 1106.0,1544.0C1123.6,1540.8 1141.0,1536.4 1158.0,1531.0C1179.6,1524.1 1200.0,1513.7 1221.0,1505.0L1222.5,1789.0C1203.5,1796.3 1184.9,1804.8 1165.5,1811.0C1148.3,1816.5 1130.8,1821.4 1113.0,1825.0C1097.2,1828.2 1081.1,1830.6 1065.0,1832.0C1047.7,1833.5 1030.3,1834.0 1013.0,1833.0C994.2,1831.9 975.4,1829.2 957.0,1825.0C942.1,1821.6 927.9,1815.6 913.0,1812.0C901.6,1809.2 889.7,1808.4 878.5,1805.0C868.4,1802.0 858.8,1797.4 849.0,1793.5C835.3,1788.1 821.7,1782.5 808.0,1777.0C789.3,1769.4 770.8,1761.2 752.0,1754.0C733.5,1746.9 715.2,1738.9 696.0,1734.0C678.6,1729.5 660.7,1728.0 643.0,1725.0Z" fill="url(#sideL)" stroke="none" stroke-width="0" stroke-linejoin="round" /><path d="M3418.0,690.0C3435.7,695.0 3453.2,700.3 3471.0,705.0C3490.2,710.1 3509.4,715.7 3529.0,719.0C3548.2,722.3 3567.6,725.3 3587.0,725.0C3603.8,724.7 3620.6,722.5 3637.0,719.0C3652.7,715.7 3668.4,711.6 3683.0,705.0C3694.6,699.8 3705.0,692.3 3716.0,686.0L3602.0,883.0C3597.0,892.0 3593.3,901.8 3587.0,910.0C3578.6,920.9 3567.9,930.1 3556.0,937.0C3546.4,942.5 3535.7,946.2 3525.0,949.0C3507.5,953.6 3489.0,953.9 3471.0,953.0C3450.0,952.0 3429.4,946.1 3409.0,941.0C3383.1,934.5 3358.3,924.3 3333.0,916.0Z" fill="url(#headS)" stroke="none" stroke-width="0" stroke-linejoin="round" /><path d="M3637.0,719.0L3683.0,705.0L3716.0,686.0L3602.0,883.0L3587.0,910.0L3556.0,937.0L3525.0,949.0Z" fill="#002a42" stroke="none" stroke-width="0" stroke-linejoin="round" /><path d="M643.0,1167.2C689.0,1153.8 735.0,1140.4 781.0,1127.0C827.2,1113.5 872.8,1098.1 919.5,1086.4C930.3,1083.7 941.1,1081.1 952.0,1078.6C962.9,1076.1 973.8,1073.9 984.7,1071.7C1020.2,1064.6 1056.2,1059.8 1092.0,1054.0C1127.7,1048.2 1163.3,1042.5 1199.0,1036.8L1413.0,1413.5L1221.0,1505.0C1200.0,1513.7 1179.6,1524.1 1158.0,1531.0C1141.0,1536.4 1123.6,1540.8 1106.0,1544.0C1087.5,1547.3 1068.8,1549.1 1050.0,1550.0C1031.4,1550.9 1012.6,1550.7 994.0,1549.4C975.2,1548.1 956.5,1545.4 938.0,1542.0C919.1,1538.6 900.5,1533.9 882.0,1529.0C866.9,1525.0 851.1,1522.8 837.0,1516.0C827.4,1511.4 818.3,1505.7 810.0,1499.0C806.5,1496.2 803.3,1493.0 800.0,1490.0Z" fill="#0069a6" stroke="none" stroke-width="0" stroke-linejoin="round" /><path d="M643.0,1167.0L800.0,1490.0L643.0,1493.0Z" fill="url(#slopeL)" stroke="none" stroke-width="0" stroke-linejoin="round" /><path d="M643.0,1493.0L800.0,1490.0L810.0,1499.0L837.0,1516.0L643.0,1526.0Z" fill="url(#blendL)" stroke="none" stroke-width="0" stroke-linejoin="round" /><path d="M1199.0,1036.5C1214.0,1040.0 1228.9,1044.1 1244.0,1047.0C1266.1,1051.3 1288.5,1054.1 1311.0,1056.0C1340.6,1058.5 1370.3,1057.3 1400.0,1058.0L1600.0,1100.0L1680.0,1308.0L1702.5,1343.5L1617.0,1369.6L1524.0,1399.4L1497.0,1406.0L1413.0,1413.5Z" fill="url(#angF)" stroke="none" stroke-width="0" stroke-linejoin="round" /><path d="M1560.0,1100.0L1683.7,1006.5C1769.5,986.8 1855.6,968.4 1941.0,947.3C2037.1,923.6 2132.9,898.4 2228.0,870.9C2294.1,851.8 2359.5,830.3 2425.4,810.5C2493.2,790.1 2561.1,770.4 2629.0,750.3L2790.0,948.0L2260.0,1127.3C2188.5,1152.2 2116.3,1175.4 2045.4,1202.0C1982.8,1225.5 1920.8,1250.8 1859.0,1276.4C1806.6,1298.2 1754.7,1321.1 1702.5,1343.5L1680.0,1308.0Z" fill="#0069a6" stroke="none" stroke-width="0" stroke-linejoin="round" /><path d="M2629.0,750.3C2644.2,739.7 2659.8,729.8 2674.5,718.5C2687.4,708.5 2700.0,698.0 2712.0,687.0C2724.2,675.9 2735.3,663.7 2747.0,652.0L2918.0,854.6C2908.5,862.7 2899.2,871.1 2889.5,879.0C2871.6,893.6 2852.7,907.0 2833.6,920.0C2819.3,929.7 2804.5,938.7 2790.0,948.0Z" fill="url(#slope2)" stroke="none" stroke-width="0" stroke-linejoin="round" /><path d="M2747.0,652.0L2820.0,633.0L2972.0,600.0L3027.0,588.0L3138.5,557.0L3304.4,737.0L3168.0,782.0L3151.6,783.7L3140.0,778.0L3084.5,797.0L3012.0,824.0L2931.7,852.7L2918.0,854.6Z" fill="#0069a6" stroke="none" stroke-width="0" stroke-linejoin="round" /><path d="M3138.5,557.0C3152.3,551.3 3166.6,546.6 3180.0,540.0C3192.1,534.1 3203.3,526.7 3215.0,520.0L3381.7,701.5L3304.4,740.0Z" fill="url(#slope3)" stroke="none" stroke-width="0" stroke-linejoin="round" /><path d="M3215.0,520.0L3248.5,510.0L3256.0,481.5L3293.0,522.0C3296.7,530.3 3299.8,538.9 3304.0,547.0C3311.4,561.0 3320.3,574.4 3331.0,586.0C3343.4,599.5 3359.5,608.9 3374.0,620.0C3386.5,629.5 3400.4,637.4 3412.0,648.0C3417.2,652.8 3422.1,657.9 3427.0,663.0C3433.1,669.2 3439.0,675.6 3445.0,682.0C3451.0,688.5 3457.0,695.0 3463.0,701.5L3418.0,690.0L3385.6,701.5L3381.7,701.5Z" fill="#0069a6" stroke="none" stroke-width="0" stroke-linejoin="round" /><path d="M3256.0,481.5C3263.0,471.0 3267.7,458.5 3277.0,450.0C3290.5,437.6 3310.3,434.0 3328.0,429.0C3354.1,421.6 3381.8,419.1 3409.0,420.0C3429.9,420.7 3450.5,424.8 3471.0,429.0C3490.6,433.1 3510.1,438.0 3529.0,444.5C3548.9,451.4 3568.2,460.0 3587.0,469.6C3607.1,479.9 3627.1,490.7 3645.0,504.4C3658.6,514.8 3671.6,526.2 3683.0,539.0C3694.8,552.2 3706.1,566.2 3714.0,582.0C3721.9,597.6 3728.6,614.6 3730.0,632.0C3730.5,638.3 3730.8,644.7 3730.0,651.0C3728.4,663.5 3720.7,674.3 3716.0,686.0C3705.0,692.3 3694.6,699.8 3683.0,705.0C3668.4,711.6 3652.7,715.7 3637.0,719.0C3620.6,722.5 3603.8,724.7 3587.0,725.0C3567.6,725.3 3548.2,722.3 3529.0,719.0C3509.4,715.7 3490.2,710.1 3471.0,705.0C3453.2,700.3 3435.7,695.0 3418.0,690.0L3463.0,701.5C3457.0,695.0 3451.0,688.5 3445.0,682.0C3439.0,675.6 3433.1,669.2 3427.0,663.0C3422.1,657.9 3417.2,652.8 3412.0,648.0C3400.4,637.4 3386.5,629.5 3374.0,620.0C3359.5,608.9 3343.4,599.5 3331.0,586.0C3320.3,574.4 3311.4,561.0 3304.0,547.0C3299.8,538.9 3296.7,530.3 3293.0,522.0Z" fill="#055c94" stroke="none" stroke-width="0" stroke-linejoin="round" /><path d="M3293.0,522.0C3296.7,530.3 3299.8,538.9 3304.0,547.0C3311.4,561.0 3320.3,574.4 3331.0,586.0C3343.4,599.5 3359.5,608.9 3374.0,620.0C3386.5,629.5 3400.4,637.4 3412.0,648.0C3417.2,652.8 3422.1,657.9 3427.0,663.0C3433.1,669.2 3439.0,675.6 3445.0,682.0C3451.0,688.5 3457.0,695.0 3463.0,701.5C3422.0,659.3 3417.1,655.6 3412.0,652.0C3400.6,643.9 3388.4,637.1 3377.0,629.0C3362.1,618.4 3346.4,608.4 3334.0,595.0C3323.4,583.6 3314.1,570.8 3307.0,557.0C3302.6,548.4 3299.7,539.0 3296.0,530.0Z" fill="#03375c" stroke="none" stroke-width="0" stroke-linejoin="round" /><path d="M1720.0,1038.7C1729.0,1032.5 1737.5,1025.4 1747.0,1020.0C1756.3,1014.7 1766.0,1010.4 1776.0,1006.6C1782.1,1004.3 1788.4,1002.5 1794.6,1000.4L2452.4,841.4L2461.4,883.5L1805.0,1042.8C1798.1,1044.5 1791.0,1045.7 1784.2,1048.0C1775.6,1050.9 1766.8,1054.1 1759.4,1059.4C1753.0,1064.0 1748.3,1070.5 1742.8,1076.0Z" fill="url(#band1)" stroke="none" stroke-width="0" stroke-linejoin="round" /><path d="M1742.8,1076.0C1748.3,1070.5 1753.0,1064.0 1759.4,1059.4C1766.8,1054.1 1775.6,1050.9 1784.2,1048.0C1791.0,1045.7 1798.1,1044.5 1805.0,1042.8L2461.4,883.5L2466.2,910.4L1810.7,1070.8C1799.1,1075.3 1786.9,1078.2 1776.0,1084.2C1769.5,1087.8 1762.3,1091.0 1757.3,1096.6C1753.1,1101.3 1750.2,1107.2 1748.0,1113.2C1746.5,1117.2 1745.9,1121.5 1744.9,1125.6Z" fill="url(#band2)" stroke="none" stroke-width="0" stroke-linejoin="round" /><path d="M1720.0,1038.7C1729.0,1032.5 1737.5,1025.4 1747.0,1020.0C1756.3,1014.7 1766.0,1010.4 1776.0,1006.6C1782.1,1004.3 1788.4,1002.5 1794.6,1000.4L1805.0,1042.8C1798.1,1044.5 1791.0,1045.7 1784.2,1048.0C1775.6,1050.9 1766.8,1054.1 1759.4,1059.4C1753.0,1064.0 1748.3,1070.5 1742.8,1076.0Z" fill="url(#band1s)" stroke="none" stroke-width="0" stroke-linejoin="round" /><clipPath id="b1ec"><path d="M2452.4,841.4C2460.5,840.1 2468.4,837.9 2476.6,837.5C2485.8,837.0 2495.1,837.9 2504.2,839.3C2513.6,840.8 2522.9,843.0 2531.8,846.2C2541.4,849.6 2550.8,853.8 2559.4,859.3C2566.8,864.1 2573.8,869.7 2580.0,875.9C2586.2,882.2 2592.4,888.8 2596.6,896.6C2600.1,903.1 2602.9,910.1 2604.2,917.3C2605.1,922.3 2605.6,927.5 2605.0,932.5C2604.3,938.3 2602.2,943.9 2599.4,949.0C2596.3,954.8 2591.8,959.8 2587.0,964.2C2582.8,968.0 2578.1,971.1 2573.2,973.9C2569.2,976.2 2564.9,978.0 2560.8,980.0L2555.2,969.7C2557.5,967.4 2560.0,965.3 2562.1,962.8C2564.2,960.2 2566.3,957.5 2567.7,954.5C2569.3,951.1 2570.3,947.3 2570.4,943.5C2570.5,939.8 2569.6,936.0 2568.4,932.5C2566.8,927.5 2563.8,923.0 2560.8,918.7C2556.6,912.7 2551.3,907.4 2545.6,902.8C2539.3,897.7 2532.2,893.8 2524.9,890.4C2518.3,887.3 2511.4,884.5 2504.2,882.8C2497.4,881.2 2490.4,880.2 2483.5,880.3C2476.1,880.4 2468.8,882.4 2461.4,883.5Z"/></clipPath><path d="M2452.4,841.4C2460.5,840.1 2468.4,837.9 2476.6,837.5C2485.8,837.0 2495.1,837.9 2504.2,839.3C2513.6,840.8 2522.9,843.0 2531.8,846.2C2541.4,849.6 2550.8,853.8 2559.4,859.3C2566.8,864.1 2573.8,869.7 2580.0,875.9C2586.2,882.2 2592.4,888.8 2596.6,896.6C2600.1,903.1 2602.9,910.1 2604.2,917.3C2605.1,922.3 2605.6,927.5 2605.0,932.5C2604.3,938.3 2602.2,943.9 2599.4,949.0C2596.3,954.8 2591.8,959.8 2587.0,964.2C2582.8,968.0 2578.1,971.1 2573.2,973.9C2569.2,976.2 2564.9,978.0 2560.8,980.0L2555.2,969.7C2557.5,967.4 2560.0,965.3 2562.1,962.8C2564.2,960.2 2566.3,957.5 2567.7,954.5C2569.3,951.1 2570.3,947.3 2570.4,943.5C2570.5,939.8 2569.6,936.0 2568.4,932.5C2566.8,927.5 2563.8,923.0 2560.8,918.7C2556.6,912.7 2551.3,907.4 2545.6,902.8C2539.3,897.7 2532.2,893.8 2524.9,890.4C2518.3,887.3 2511.4,884.5 2504.2,882.8C2497.4,881.2 2490.4,880.2 2483.5,880.3C2476.1,880.4 2468.8,882.4 2461.4,883.5Z" fill="url(#band1e)" stroke="none" stroke-width="0" stroke-linejoin="round" /><g clip-path="url(#b1ec)"><path d="M2515.0,866.0C2527.3,870.3 2541.0,872.0 2552.0,879.0C2561.3,885.0 2569.7,892.9 2576.0,902.0C2580.2,908.1 2582.7,915.3 2586.0,922.0" fill="none" stroke="#38a8ee" stroke-width="8" stroke-linejoin="round" filter="url(#glow2)" opacity="0.95"/><path d="M2452.0,845.0C2458.0,856.7 2458.9,873.0 2470.0,880.0C2478.6,885.4 2490.0,883.3 2500.0,885.0" fill="none" stroke="#021e33" stroke-width="26" stroke-linejoin="round" filter="url(#glow)" opacity="0.8"/></g><clipPath id="b2ec"><path d="M2461.4,883.5C2468.8,882.4 2476.1,880.4 2483.5,880.3C2490.4,880.2 2497.4,881.2 2504.2,882.8C2511.4,884.5 2518.3,887.3 2524.9,890.4C2532.2,893.8 2539.3,897.7 2545.6,902.8C2551.3,907.4 2556.6,912.7 2560.8,918.7C2563.8,923.0 2566.8,927.5 2568.4,932.5C2569.6,936.0 2570.5,939.8 2570.4,943.5C2570.3,947.3 2569.3,951.1 2567.7,954.5C2566.3,957.5 2564.2,960.2 2562.1,962.8C2560.0,965.3 2557.5,967.4 2555.2,969.7L2540.8,973.9C2542.2,971.1 2543.9,968.5 2544.9,965.6C2546.1,962.0 2547.0,958.3 2547.0,954.5C2547.0,950.8 2546.2,947.0 2544.9,943.5C2543.0,938.3 2539.6,933.8 2535.9,929.7C2532.0,925.3 2527.1,921.7 2522.1,918.7C2516.6,915.3 2510.5,912.8 2504.2,911.1C2497.5,909.3 2490.4,908.7 2483.5,908.7C2477.7,908.7 2472.0,909.8 2466.2,910.4Z"/></clipPath><path d="M2461.4,883.5C2468.8,882.4 2476.1,880.4 2483.5,880.3C2490.4,880.2 2497.4,881.2 2504.2,882.8C2511.4,884.5 2518.3,887.3 2524.9,890.4C2532.2,893.8 2539.3,897.7 2545.6,902.8C2551.3,907.4 2556.6,912.7 2560.8,918.7C2563.8,923.0 2566.8,927.5 2568.4,932.5C2569.6,936.0 2570.5,939.8 2570.4,943.5C2570.3,947.3 2569.3,951.1 2567.7,954.5C2566.3,957.5 2564.2,960.2 2562.1,962.8C2560.0,965.3 2557.5,967.4 2555.2,969.7L2540.8,973.9C2542.2,971.1 2543.9,968.5 2544.9,965.6C2546.1,962.0 2547.0,958.3 2547.0,954.5C2547.0,950.8 2546.2,947.0 2544.9,943.5C2543.0,938.3 2539.6,933.8 2535.9,929.7C2532.0,925.3 2527.1,921.7 2522.1,918.7C2516.6,915.3 2510.5,912.8 2504.2,911.1C2497.5,909.3 2490.4,908.7 2483.5,908.7C2477.7,908.7 2472.0,909.8 2466.2,910.4Z" fill="url(#band2e)" stroke="none" stroke-width="0" stroke-linejoin="round" /><g clip-path="url(#b2ec)"><path d="M2512.0,901.0C2517.3,903.3 2523.0,905.0 2528.0,908.0C2533.5,911.3 2538.6,915.3 2543.0,920.0C2546.9,924.2 2549.7,929.3 2553.0,934.0" fill="none" stroke="#3aaaf0" stroke-width="6" stroke-linejoin="round" filter="url(#glow2)" opacity="0.95"/><path d="M2461.0,886.0C2467.3,885.3 2473.6,884.0 2480.0,884.0C2486.7,884.0 2493.3,885.3 2500.0,886.0" fill="none" stroke="#021e33" stroke-width="12" stroke-linejoin="round" filter="url(#glow2)" opacity="0.8"/></g><path d="M2560.8,980.0L1941.6,1223.0C1934.0,1225.7 1926.6,1229.1 1918.8,1231.2C1908.7,1234.0 1898.2,1235.5 1887.7,1236.4C1873.9,1237.6 1860.0,1236.9 1846.3,1235.4C1832.3,1233.8 1818.5,1231.0 1805.0,1227.0C1790.7,1222.8 1776.4,1217.9 1763.5,1210.5C1755.1,1205.7 1747.6,1199.5 1739.7,1194.0L1742.8,1154.6C1744.9,1161.4 1745.8,1168.6 1749.0,1175.0C1752.6,1182.1 1757.6,1188.6 1763.5,1194.0C1770.6,1200.5 1779.7,1204.3 1788.4,1208.4C1800.2,1214.0 1812.9,1218.0 1825.6,1220.9C1839.1,1224.0 1853.1,1225.7 1867.0,1226.0C1880.8,1226.3 1895.1,1226.8 1908.4,1223.0C1914.8,1221.2 1920.8,1218.1 1927.0,1215.7L2540.8,973.9Z" fill="#066bac" stroke="none" stroke-width="0" stroke-linejoin="round" /><path d="M1941.6,1223.0C1934.0,1225.7 1926.6,1229.1 1918.8,1231.2C1908.7,1234.0 1898.2,1235.5 1887.7,1236.4C1873.9,1237.6 1860.0,1236.9 1846.3,1235.4C1832.3,1233.8 1818.5,1231.0 1805.0,1227.0C1790.7,1222.8 1776.4,1217.9 1763.5,1210.5C1755.1,1205.7 1747.6,1199.5 1739.7,1194.0L1742.8,1154.6C1744.9,1161.4 1745.8,1168.6 1749.0,1175.0C1752.6,1182.1 1757.6,1188.6 1763.5,1194.0C1770.6,1200.5 1779.7,1204.3 1788.4,1208.4C1800.2,1214.0 1812.9,1218.0 1825.6,1220.9C1839.1,1224.0 1853.1,1225.7 1867.0,1226.0C1880.8,1226.3 1895.1,1226.8 1908.4,1223.0C1914.8,1221.2 1920.8,1218.1 1927.0,1215.7Z" fill="url(#lowb)" stroke="none" stroke-width="0" stroke-linejoin="round" /><path d="M1720.0,1038.7C1729.0,1032.5 1737.5,1025.4 1747.0,1020.0C1756.3,1014.7 1766.0,1010.4 1776.0,1006.6C1782.1,1004.3 1788.4,1002.5 1794.6,1000.4L2452.4,841.4C2460.5,840.1 2468.4,837.9 2476.6,837.5C2485.8,837.0 2495.1,837.9 2504.2,839.3C2513.6,840.8 2522.9,843.0 2531.8,846.2C2541.4,849.6 2550.8,853.8 2559.4,859.3C2566.8,864.1 2573.8,869.7 2580.0,875.9C2586.2,882.2 2592.4,888.8 2596.6,896.6C2600.1,903.1 2602.9,910.1 2604.2,917.3C2605.1,922.3 2605.6,927.5 2605.0,932.5C2604.3,938.3 2602.2,943.9 2599.4,949.0C2596.3,954.8 2591.8,959.8 2587.0,964.2C2582.8,968.0 2578.1,971.1 2573.2,973.9C2569.2,976.2 2564.9,978.0 2560.8,980.0L1941.6,1223.0C1934.0,1225.7 1926.6,1229.1 1918.8,1231.2C1908.7,1234.0 1898.2,1235.5 1887.7,1236.4C1873.9,1237.6 1860.0,1236.9 1846.3,1235.4C1832.3,1233.8 1818.5,1231.0 1805.0,1227.0C1790.7,1222.8 1776.4,1217.9 1763.5,1210.5C1755.1,1205.7 1747.6,1199.5 1739.7,1194.0" fill="none" stroke="#000" stroke-width="2.8" stroke-linejoin="round" /><path d="M1742.8,1076.0C1748.3,1070.5 1753.0,1064.0 1759.4,1059.4C1766.8,1054.1 1775.6,1050.9 1784.2,1048.0C1791.0,1045.7 1798.1,1044.5 1805.0,1042.8L2461.4,883.5C2468.8,882.4 2476.1,880.4 2483.5,880.3C2490.4,880.2 2497.4,881.2 2504.2,882.8C2511.4,884.5 2518.3,887.3 2524.9,890.4C2532.2,893.8 2539.3,897.7 2545.6,902.8C2551.3,907.4 2556.6,912.7 2560.8,918.7C2563.8,923.0 2566.8,927.5 2568.4,932.5C2569.6,936.0 2570.5,939.8 2570.4,943.5C2570.3,947.3 2569.3,951.1 2567.7,954.5C2566.3,957.5 2564.2,960.2 2562.1,962.8C2560.0,965.3 2557.5,967.4 2555.2,969.7" fill="none" stroke="#000" stroke-width="2.52" stroke-linejoin="round" /><path d="M1744.9,1125.6C1745.9,1121.5 1746.5,1117.2 1748.0,1113.2C1750.2,1107.2 1753.1,1101.3 1757.3,1096.6C1762.3,1091.0 1769.5,1087.8 1776.0,1084.2C1786.9,1078.2 1799.1,1075.3 1810.7,1070.8L2466.2,910.4C2472.0,909.8 2477.7,908.7 2483.5,908.7C2490.4,908.7 2497.5,909.3 2504.2,911.1C2510.5,912.8 2516.6,915.3 2522.1,918.7C2527.1,921.7 2532.0,925.3 2535.9,929.7C2539.6,933.8 2543.0,938.3 2544.9,943.5C2546.2,947.0 2547.0,950.8 2547.0,954.5C2547.0,958.3 2546.1,962.0 2544.9,965.6C2543.9,968.5 2542.2,971.1 2540.8,973.9L1927.0,1215.7C1920.8,1218.1 1914.8,1221.2 1908.4,1223.0C1895.1,1226.8 1880.8,1226.3 1867.0,1226.0C1853.1,1225.7 1839.1,1224.0 1825.6,1220.9C1812.9,1218.0 1800.2,1214.0 1788.4,1208.4C1779.7,1204.3 1770.6,1200.5 1763.5,1194.0C1757.6,1188.6 1752.6,1182.1 1749.0,1175.0C1745.8,1168.6 1743.8,1161.6 1742.8,1154.6C1741.4,1145.0 1744.2,1135.3 1744.9,1125.6" fill="none" stroke="#000" stroke-width="2.52" stroke-linejoin="round" /><path d="M1794.6,1000.4C1797.4,1007.6 1801.2,1014.5 1802.9,1022.0C1804.5,1028.8 1804.2,1035.9 1805.0,1042.8C1805.6,1048.3 1805.7,1054.0 1807.0,1059.4C1807.9,1063.3 1809.5,1067.0 1810.7,1070.8" fill="none" stroke="#000" stroke-width="2.52" stroke-linejoin="round" /><path d="M2452.4,841.4C2454.9,846.9 2458.3,852.2 2460.0,858.0C2461.8,864.2 2463.0,870.8 2462.5,877.3C2462.3,879.6 2461.6,881.9 2461.4,884.2C2461.0,889.3 2461.7,894.4 2462.8,899.4C2463.6,903.2 2465.1,906.7 2466.2,910.4" fill="none" stroke="#000" stroke-width="2.52" stroke-linejoin="round" /><path d="M2540.8,973.9C2543.8,973.7 2546.8,972.7 2549.7,973.2C2554.0,974.0 2557.1,977.7 2560.8,980.0" fill="none" stroke="#000" stroke-width="2" stroke-linejoin="round" /><path d="M2540.8,973.9L1927.0,1215.7" fill="none" stroke="#02263f" stroke-width="0.8" stroke-linejoin="round" opacity="0.7"/><path d="M1927.0,1215.7L1941.6,1223.0" fill="none" stroke="#000" stroke-width="2" stroke-linejoin="round" /><path d="M643.0,1167.2C689.0,1153.8 735.0,1140.4 781.0,1127.0C827.2,1113.5 872.8,1098.1 919.5,1086.4C930.3,1083.7 941.1,1081.1 952.0,1078.6C962.9,1076.1 973.8,1073.9 984.7,1071.7C1020.2,1064.6 1056.2,1059.8 1092.0,1054.0C1127.7,1048.2 1163.3,1042.5 1199.0,1036.8C1214.0,1040.0 1228.9,1044.1 1244.0,1047.0C1266.1,1051.3 1288.5,1054.1 1311.0,1056.0C1340.6,1058.5 1370.3,1057.3 1400.0,1058.0M1199.0,1036.5L1413.0,1413.5M643.0,1167.0L800.0,1490.0L643.0,1493.0M643.0,1526.0L837.0,1516.0M800.0,1490.0C803.3,1493.0 806.5,1496.2 810.0,1499.0C818.3,1505.7 827.4,1511.4 837.0,1516.0C851.1,1522.8 866.9,1525.0 882.0,1529.0C900.5,1533.9 919.1,1538.6 938.0,1542.0C956.5,1545.4 975.2,1548.1 994.0,1549.4C1012.6,1550.7 1031.4,1550.9 1050.0,1550.0C1068.8,1549.1 1087.5,1547.3 1106.0,1544.0C1123.6,1540.8 1141.0,1536.4 1158.0,1531.0C1179.6,1524.1 1200.0,1513.7 1221.0,1505.0L1413.0,1413.5C1441.0,1411.0 1469.5,1411.7 1497.0,1406.0C1506.1,1404.1 1515.0,1401.7 1524.0,1399.4C1555.5,1391.2 1585.9,1379.3 1617.0,1369.6C1645.4,1360.7 1674.3,1353.3 1702.5,1343.5C1756.1,1324.9 1806.6,1298.2 1859.0,1276.4C1920.8,1250.8 1982.8,1225.5 2045.4,1202.0C2116.3,1175.4 2188.5,1152.2 2260.0,1127.3L2790.0,948.0C2804.5,938.7 2819.3,929.7 2833.6,920.0C2852.7,907.0 2871.6,893.6 2889.5,879.0C2899.2,871.1 2908.5,862.7 2918.0,854.6L2931.7,852.7L3012.0,824.0M1680.0,1308.0L1702.5,1343.5M1683.7,1006.5C1769.5,986.8 1855.6,968.4 1941.0,947.3C2037.1,923.6 2132.9,898.4 2228.0,870.9C2294.1,851.8 2359.5,830.3 2425.4,810.5C2493.2,790.1 2561.1,770.4 2629.0,750.3C2644.2,739.7 2659.8,729.8 2674.5,718.5C2687.4,708.5 2700.0,698.0 2712.0,687.0C2724.2,675.9 2735.3,663.7 2747.0,652.0L2820.0,633.0M2629.0,750.3L2790.0,948.0M2747.0,652.0L2918.0,854.6M3027.0,588.0L3138.5,557.0C3152.3,551.3 3166.6,546.6 3180.0,540.0C3192.1,534.1 3203.3,526.7 3215.0,520.0L3248.5,510.0L3256.0,481.5C3263.0,471.0 3267.7,458.5 3277.0,450.0C3290.5,437.6 3310.3,434.0 3328.0,429.0C3354.1,421.6 3381.8,419.1 3409.0,420.0C3429.9,420.7 3450.5,424.8 3471.0,429.0C3490.6,433.1 3510.1,438.0 3529.0,444.5C3548.9,451.4 3568.2,460.0 3587.0,469.6C3607.1,479.9 3627.1,490.7 3645.0,504.4C3658.6,514.8 3671.6,526.2 3683.0,539.0C3694.8,552.2 3706.1,566.2 3714.0,582.0C3721.9,597.6 3728.6,614.6 3730.0,632.0C3730.5,638.3 3730.8,644.7 3730.0,651.0C3728.4,663.5 3720.7,674.3 3716.0,686.0L3602.0,883.0C3597.0,892.0 3593.3,901.8 3587.0,910.0C3578.6,920.9 3567.9,930.1 3556.0,937.0C3546.4,942.5 3535.7,946.2 3525.0,949.0C3507.5,953.6 3489.0,953.9 3471.0,953.0C3450.0,952.0 3429.4,946.1 3409.0,941.0C3383.1,934.5 3358.3,924.3 3333.0,916.0C3282.0,926.5 3229.5,931.2 3180.0,947.5C3168.9,951.1 3157.7,954.6 3147.0,959.3C3138.1,963.2 3129.4,967.5 3121.0,972.5C3111.8,978.0 3102.7,983.7 3094.7,990.8C3084.5,999.9 3076.5,1011.2 3068.5,1022.3C3063.9,1028.7 3059.8,1035.4 3055.4,1042.0L2996.0,1060.7C2985.3,1066.5 2975.4,1073.8 2964.0,1078.0C2952.8,1082.2 2940.7,1083.1 2929.0,1085.7L2850.0,1117.4L2826.0,1125.0C2810.0,1119.7 2794.6,1112.1 2778.0,1109.0C2767.5,1107.1 2756.7,1107.0 2746.0,1106.0C2611.3,1150.7 2474.3,1188.8 2342.0,1240.0C2314.6,1250.6 2287.4,1261.9 2260.0,1272.7C2167.0,1309.4 2072.8,1342.8 1980.0,1380.0C1920.6,1403.8 1861.0,1427.4 1802.4,1453.3C1769.1,1468.0 1735.8,1483.0 1703.0,1498.8C1673.7,1512.9 1644.2,1526.6 1616.0,1542.7C1603.4,1549.9 1591.1,1557.4 1578.8,1565.0C1557.8,1577.9 1536.5,1590.3 1516.6,1604.8C1502.1,1615.4 1488.4,1627.1 1474.4,1638.4C1451.3,1657.2 1430.5,1679.0 1406.0,1696.0C1376.5,1716.5 1343.1,1730.8 1311.0,1747.0C1281.8,1761.7 1252.6,1776.4 1222.5,1789.0C1203.7,1796.9 1184.9,1804.8 1165.5,1811.0C1148.3,1816.5 1130.8,1821.4 1113.0,1825.0C1097.2,1828.2 1081.1,1830.6 1065.0,1832.0C1047.7,1833.5 1030.3,1834.0 1013.0,1833.0C994.2,1831.9 975.4,1829.2 957.0,1825.0C942.1,1821.6 927.9,1815.6 913.0,1812.0C901.6,1809.2 889.7,1808.4 878.5,1805.0C868.4,1802.0 858.8,1797.4 849.0,1793.5C835.3,1788.1 821.7,1782.5 808.0,1777.0C789.3,1769.4 770.8,1761.2 752.0,1754.0C733.5,1746.9 715.2,1738.9 696.0,1734.0C678.6,1729.5 660.7,1728.0 643.0,1725.0M3138.5,557.0L3304.4,737.0M3215.0,520.0L3381.7,701.5M3256.0,481.5L3293.0,522.0C3296.7,530.3 3299.8,538.9 3304.0,547.0C3311.4,561.0 3320.3,574.4 3331.0,586.0C3343.4,599.5 3359.5,608.9 3374.0,620.0C3386.5,629.5 3400.4,637.4 3412.0,648.0C3417.2,652.8 3422.1,657.9 3427.0,663.0C3433.1,669.2 3439.0,675.6 3445.0,682.0C3451.0,688.5 3457.0,695.0 3463.0,701.5M3307.0,557.0C3316.0,569.7 3323.4,583.6 3334.0,595.0C3346.4,608.4 3362.1,618.4 3377.0,629.0C3388.4,637.1 3400.6,643.9 3412.0,652.0C3417.1,655.6 3422.0,659.3 3427.0,663.0M3084.5,797.0L3140.0,778.0C3143.9,779.9 3147.4,782.8 3151.6,783.7C3157.0,784.9 3162.5,782.6 3168.0,782.0L3304.4,737.0C3330.5,724.7 3355.3,709.2 3382.6,700.0C3394.2,696.1 3406.2,693.3 3418.0,690.0C3435.7,695.0 3453.2,700.3 3471.0,705.0C3490.2,710.1 3509.4,715.7 3529.0,719.0C3548.2,722.3 3567.6,725.3 3587.0,725.0C3603.8,724.7 3620.6,722.5 3637.0,719.0C3652.7,715.7 3668.4,711.6 3683.0,705.0C3694.6,699.8 3705.0,692.3 3716.0,686.0M3418.0,690.0L3333.0,916.0M3637.0,719.0L3525.0,949.0M3120.0,733.4L3151.6,783.7M890.4,1530.8L913.2,1812.0M1159.0,1531.6L1165.5,1811.0M1221.4,1506.6L1222.5,1788.7M2931.7,852.7L2850.3,1117.4M3012.0,824.0L2928.6,1085.7M3083.3,796.9L2995.7,1060.7" fill="none" stroke="#000" stroke-width="2.8" stroke-linejoin="round" stroke-linecap="round"/><path d="M3120.0,733.4L3151.6,783.7L3168.0,782.0L3128.0,728.0Z" fill="#0a6aa8" stroke="#000" stroke-width="2" stroke-linejoin="round" /><path d="M1737.6,1193.8L1738.2,1208.6L1736.6,1223.2L1732.7,1237.5L1726.6,1251.3L1718.4,1264.5L1708.2,1276.8L1696.2,1288.1L1682.4,1298.2L1667.0,1307.1L1650.4,1314.6L1632.6,1320.6L1613.9,1325.0L1594.6,1327.8L1574.9,1328.9L1555.0,1328.4L1535.3,1326.2L1515.9,1322.3L1497.1,1316.8L1479.2,1309.9L1462.5,1301.5L1447.0,1291.7L1433.1,1280.8L1420.8,1268.8L1410.4,1256.0L1402.1,1242.3L1395.8,1228.2L1391.7,1213.7L1389.8,1198.9L1390.2,1184.2L1392.9,1169.7L1392.9,1090.4L1395.6,1073.7L1401.3,1057.5L1409.8,1042.1L1421.0,1027.7L1434.8,1014.6L1450.9,1003.0L1469.0,993.1L1488.8,985.1L1509.9,979.1L1532.1,975.2L1554.9,973.5L1578.0,974.0L1600.9,976.7L1623.3,981.6L1644.7,988.5L1664.8,997.4L1683.3,1008.1L1699.9,1020.4L1714.2,1034.1L1726.0,1049.0L1735.1,1064.8L1741.4,1081.3L1744.7,1098.1L1745.1,1115.0Z" fill="url(#boss1s)" stroke="#000" stroke-width="2.8" stroke-linejoin="round" /><ellipse cx="1569" cy="1102.7" rx="176.5" ry="129" transform="rotate(4 1569 1102.7)" fill="#0069a6" stroke="#000" stroke-width="2.8"/><ellipse cx="1570.2" cy="1100.9" rx="82.5" ry="60" transform="rotate(3 1570.2 1100.9)" fill="url(#cham1)" stroke="#000" stroke-width="2.8"/><ellipse cx="1569.6" cy="1108" rx="70.5" ry="51" transform="rotate(3 1569.6 1108)" fill="url(#hole1)" stroke="#000" stroke-width="2.8"/><path d="M3112.3,708.5L3116.2,722.6L3117.6,736.6L3116.3,750.2L3112.4,763.2L3105.9,775.4L3097.1,786.6L3085.9,796.5L3072.6,805.0L3057.4,811.9L3040.7,817.2L3022.6,820.7L3003.5,822.4L2983.7,822.3L2963.6,820.3L2943.4,816.5L2923.6,811.0L2904.5,803.8L2886.4,795.1L2869.6,785.0L2854.4,773.7L2841.1,761.4L2829.8,748.2L2820.9,734.6L2814.3,720.5L2810.4,706.4L2809.0,692.4L2810.3,678.8L2814.2,665.8L2820.7,653.6L2829.5,642.4L2818.6,646.2L2821.3,634.1L2826.1,622.5L2833.1,611.8L2842.0,602.0L2852.9,593.3L2865.4,585.8L2879.5,579.6L2894.9,574.8L2911.5,571.5L2928.9,569.7L2946.9,569.5L2965.3,570.8L2983.8,573.7L3002.1,578.0L3020.0,583.8L3037.2,591.0L3053.5,599.3L3068.6,608.8L3082.4,619.3L3094.5,630.6L3104.9,642.6L3113.4,655.1L3119.9,668.0L3124.2,680.9Z" fill="url(#boss2s)" stroke="none" stroke-width="0" stroke-linejoin="round" /><path d="M3001.3,822.5L2985.9,822.4L2970.3,821.2L2954.6,818.8L2939.0,815.4L2923.6,811.0L2908.7,805.5L2894.3,799.1L2880.6,791.9L2867.8,783.8L2856.0,775.0L2845.3,765.6L2835.8,755.6L2827.6,745.2L2820.9,734.6L2815.6,723.7L2811.8,712.7L2809.6,701.7L2809.0,690.8L2810.0,680.2L2812.6,670.0L2816.8,660.2L2822.4,651.0L2829.5,642.4" fill="none" stroke="#000" stroke-width="1.8" stroke-linejoin="round" /><path d="M3126.0,712.0C3123.3,722.0 3121.5,732.3 3118.0,742.0C3115.8,748.1 3113.2,754.1 3110.5,760.0C3108.0,765.3 3105.8,770.8 3102.6,775.7C3097.4,783.8 3089.5,789.9 3083.0,797.0" fill="none" stroke="#000" stroke-width="2" stroke-linejoin="round" /><ellipse cx="2972.3" cy="677.5" rx="157.2" ry="103.8" transform="rotate(14.8 2972.3 677.5)" fill="#0069a6" stroke="#000" stroke-width="2.8"/><ellipse cx="2971.7" cy="676" rx="73" ry="48" transform="rotate(14 2971.7 676)" fill="url(#cham2)" stroke="#000" stroke-width="2.8"/><ellipse cx="2970" cy="682.5" rx="62.5" ry="40.5" transform="rotate(14 2970 682.5)" fill="url(#hole2)" stroke="#000" stroke-width="2.8"/><ellipse cx="1038.5" cy="1304.8" rx="185" ry="136.9" transform="rotate(0 1038.5 1304.8)" fill="url(#cyhole)"/><clipPath id="cyc"><ellipse cx="1038.5" cy="1304.8" rx="185" ry="136.9"/></clipPath><g clip-path="url(#cyc)"><ellipse cx="1049" cy="1554" rx="175.5" ry="134.7" fill="#8fe0ff"/><ellipse cx="1038.5" cy="1304.8" rx="185" ry="136.9" fill="none" stroke="#021e2c" stroke-width="60" opacity="0.25" filter="url(#glow)"/></g><g fill="none" stroke="#00c8ff" stroke-width="26" opacity="0.62" filter="url(#glow)"><ellipse cx="1038.5" cy="1304.8" rx="185" ry="136.9"/><ellipse cx="1049" cy="1554" rx="175.5" ry="134.7"/><path d="M859.9,1351.0L874.9,1530.6" stroke-width="24"/><path d="M972.8,1177.0L986.0,1425.8" stroke-width="24"/><path d="M1107.0,1432.0L1113.5,1676.0" stroke-width="24"/><path d="M1217.0,1269.7L1212.7,1505.0" stroke-width="24"/></g><g fill="none" stroke="#00c8ff" stroke-width="12" opacity="0.45" filter="url(#glow2)"><ellipse cx="1038.5" cy="1304.8" rx="185" ry="136.9"/><ellipse cx="1049" cy="1554" rx="175.5" ry="134.7"/><path d="M859.9,1351.0L874.9,1530.6" stroke-width="12"/><path d="M972.8,1177.0L986.0,1425.8" stroke-width="12"/><path d="M1107.0,1432.0L1113.5,1676.0" stroke-width="12"/><path d="M1217.0,1269.7L1212.7,1505.0" stroke-width="12"/></g><g fill="none" stroke="#00c8ff" stroke-width="9.2" opacity="1" ><ellipse cx="1038.5" cy="1304.8" rx="185" ry="136.9"/><ellipse cx="1049" cy="1554" rx="175.5" ry="134.7"/><path d="M859.9,1351.0L874.9,1530.6" stroke-width="9"/><path d="M972.8,1177.0L986.0,1425.8" stroke-width="9"/><path d="M1107.0,1432.0L1113.5,1676.0" stroke-width="9"/><path d="M1217.0,1269.7L1212.7,1505.0" stroke-width="9"/></g><clipPath id="cyc2"><ellipse cx="1038.5" cy="1304.8" rx="180" ry="131.9"/></clipPath><g clip-path="url(#cyc2)"><ellipse cx="1049" cy="1554" rx="170.5" ry="129.7" fill="#9fe6ff"/></g><ellipse cx="3510.2" cy="567" rx="149.5" ry="73.2" transform="rotate(25.9 3510.2 567)" fill="url(#redhole)"/><g fill="none" stroke="#ff0000" stroke-width="24" opacity="0.62" filter="url(#glow)"><ellipse cx="3510.2" cy="567" rx="149.5" ry="73.2" transform="rotate(25.9 3510.2 567)" /><ellipse cx="3399.5" cy="778.1" rx="144.2" ry="75.6" transform="rotate(26 3399.5 778.1)" /><path d="M3422.3,479.3L3311.6,690.3" stroke-width="22"/><path d="M3401.0,585.6L3290.3,796.6" stroke-width="22"/><path d="M3613.7,552.7L3503.0,763.7" stroke-width="22"/><path d="M3602.0,662.9L3491.3,873.9" stroke-width="22"/></g><g fill="none" stroke="#ff0000" stroke-width="12" opacity="0.35" filter="url(#glow2)"><ellipse cx="3510.2" cy="567" rx="149.5" ry="73.2" transform="rotate(25.9 3510.2 567)" /><ellipse cx="3399.5" cy="778.1" rx="144.2" ry="75.6" transform="rotate(26 3399.5 778.1)" /><path d="M3422.3,479.3L3311.6,690.3" stroke-width="11"/><path d="M3401.0,585.6L3290.3,796.6" stroke-width="11"/><path d="M3613.7,552.7L3503.0,763.7" stroke-width="11"/><path d="M3602.0,662.9L3491.3,873.9" stroke-width="11"/></g><g fill="none" stroke="#ff0000" stroke-width="9.2" opacity="1" ><ellipse cx="3510.2" cy="567" rx="149.5" ry="73.2" transform="rotate(25.9 3510.2 567)" /><ellipse cx="3399.5" cy="778.1" rx="144.2" ry="75.6" transform="rotate(26 3399.5 778.1)" /><path d="M3422.3,479.3L3311.6,690.3" stroke-width="9"/><path d="M3401.0,585.6L3290.3,796.6" stroke-width="9"/><path d="M3613.7,552.7L3503.0,763.7" stroke-width="9"/><path d="M3602.0,662.9L3491.3,873.9" stroke-width="9"/></g><defs><radialGradient id="sph" cx="0.35" cy="0.3" r="0.8"><stop offset="0" stop-color="#fff"/><stop offset="0.6" stop-color="#e8e8e8"/><stop offset="1" stop-color="#8a8a8a"/></radialGradient><linearGradient id="redS" gradientUnits="userSpaceOnUse" x1="836" y1="1879" x2="850" y2="1884"><stop offset="0" stop-color="#ff1a1a"/><stop offset="0.5" stop-color="#e00000"/><stop offset="1" stop-color="#8a0000"/></linearGradient><linearGradient id="grnS" gradientUnits="userSpaceOnUse" x1="859" y1="1966" x2="869" y2="1956"><stop offset="0" stop-color="#00b800"/><stop offset="0.5" stop-color="#10ee10"/><stop offset="1" stop-color="#00a000"/></linearGradient><linearGradient id="bluS" gradientUnits="userSpaceOnUse" x1="880" y1="1890" x2="882" y2="1899"><stop offset="0" stop-color="#1010ff"/><stop offset="0.6" stop-color="#0000d0"/><stop offset="1" stop-color="#000070"/></linearGradient></defs><path d="M859.4,1862.5L906,1848L890.8,1892.5L856,1869Z" fill="#c4c4c4" stroke="none" stroke-width="0" stroke-linejoin="round" /><path d="M859.4,1862.5L906,1848L890.8,1892.5" fill="none" stroke="#4a4a4a" stroke-width="2.6" stroke-linejoin="round" /><path d="M890.8,1909L926.7,1941.2L880,1955.7L874.9,1952.5Z" fill="#c4c4c4" stroke="none" stroke-width="0" stroke-linejoin="round" /><path d="M890.8,1909L926.7,1941.2L880,1955.7" fill="none" stroke="#4a4a4a" stroke-width="2.6" stroke-linejoin="round" /><path d="M847,1908L925.6,1884.2" fill="none" stroke="url(#bluS)" stroke-width="9" stroke-linejoin="round" /><path d="M856.3,1868.7L890.8,1909L874.9,1952.5L840,1908Z" fill="#d2cf94" stroke="none" stroke-width="0" stroke-linejoin="round" opacity="0.92"/><path d="M847,1908L889,1895.5" fill="none" stroke="#3a3a80" stroke-width="9" stroke-linejoin="round" opacity="0.75"/><path d="M856.3,1868.7L890.8,1909L874.9,1952.5" fill="none" stroke="#ffff00" stroke-width="2.6" stroke-linejoin="round" /><path d="M886,1897L925.6,1884.2" fill="none" stroke="url(#bluS)" stroke-width="9" stroke-linejoin="round" /><path d="M927,1868L958.8,1873.9L931,1900Z" fill="#00007c" stroke="none" stroke-width="0" stroke-linejoin="round" /><ellipse cx="927.7" cy="1883.6" rx="8.5" ry="16.2" transform="rotate(-12 927.7 1883.6)" fill="#0000e8"/><path d="M838.7,1902.9L861.4,1838.7" fill="none" stroke="url(#redS)" stroke-width="11" stroke-linejoin="round" /><path d="M875.9,1801.4L851,1821Q848,1831 860.5,1837Q875,1842 881.5,1834Z" fill="url(#redS)" stroke="none" stroke-width="0" stroke-linejoin="round" /><path d="M840.7,1923.6L900.8,1987.7" fill="none" stroke="url(#grnS)" stroke-width="11" stroke-linejoin="round" /><path d="M921.5,2016.7L887,2003Q884,1995 893,1985Q903,1976 914,1978Z" fill="url(#grnS)" stroke="none" stroke-width="0" stroke-linejoin="round" /><circle cx="831.4" cy="1912.2" r="13.5" fill="url(#sph)"/></g></svg>
<svg class="a" style="left:1050px;top:1220px;" width="70" height="70" viewBox="0 0 70 70"><path d="M38,2.5L38,52M12,27.5L63.5,27.5" stroke="#000" stroke-width="5.5"/><path d="M38,4L38,50.5M13.5,27.5L62,27.5" stroke="#fff" stroke-width="2.4"/><path d="M16.5,33L2,39.5L2,57L16.5,64L31,57L31,39.5Z" fill="#4da6ff" stroke="#4a5a9a" stroke-width="1.6"/><path d="M16.5,33L2,39.5L16.5,46L31,39.5Z" fill="#d8ecff" stroke="#4a5a9a" stroke-width="1.2"/><path d="M16.5,46L31,39.5L31,57L16.5,64Z" fill="#e8f3ff" stroke="#4a5a9a" stroke-width="1.2"/><rect x="43" y="50" width="5" height="4.5" fill="#fff" stroke="#000" stroke-width="1.4"/><rect x="50.5" y="50" width="5" height="4.5" fill="#fff" stroke="#000" stroke-width="1.4"/><rect x="58" y="50" width="5" height="4.5" fill="#fff" stroke="#000" stroke-width="1.4"/></svg>
<span class="t" style="left:871.2px;top:1781.8px;font-size:23px;color:#5a4a42;">X</span>
<span class="t" style="left:962.5px;top:1862.3px;font-size:23px;color:#ff0000;">Z</span>
<span class="t" style="left:921.6px;top:2018.3px;font-size:23px;color:#333;">Y</span>
<div class="a" style="left:671px;top:352px;width:555px;height:125px;background:rgba(255,255,255,0.55);"></div>
<span class="t" style="left:685.9px;top:374.0px;font-size:35.2px;color:#333;transform:scaleX(1.0187);">Edit cylindrical face: Select faces</span>
<span class="t" style="left:687.2px;top:422.4px;font-size:35.2px;color:#333;">Select a face</span>
<svg class="a" style="left:3524px;top:334px;" width="60" height="58" viewBox="0 0 60 58"><path d="M26.5,5.5L4.5,15L26.5,24.7L48.5,15Z" fill="#4da6ff"/><path d="M26.5,5.5L4.5,15L4.5,40.5L26.5,51L48.5,40.5L48.5,15ZM4.5,15L26.5,24.7L48.5,15M26.5,24.7L26.5,51" fill="none" stroke="#3d5284" stroke-width="1.5" stroke-linejoin="round"/><path d="M4.5,40.5L26.5,32.5L48.5,40.5M26.5,32.5L26.5,24.7" fill="none" stroke="#3d5284" stroke-width="1.3" stroke-dasharray="4.5 2.5"/><path d="M55,40.5L55,54.7L41,54.7Z" fill="#000"/></svg>
<svg class="a" style="left:3590px;top:334px;" width="56" height="58" viewBox="0 0 56 58"><circle cx="31" cy="22.7" r="18" fill="none" stroke="#3d5284" stroke-width="1.5"/><path d="M20,26.5A12,12 0 1 1 43,20" fill="none" stroke="#3d5284" stroke-width="1.5"/><path d="M17,33.5L4.5,46.5Q2,49.5 5,52Q8,54 10.5,51.5L23,39" fill="#fff" stroke="#3d5284" stroke-width="1.5"/><circle cx="35.8" cy="37.8" r="14" fill="#4da6ff"/><path d="M27.5,38L33.5,31.8L33.5,35.5L44,35.5L44,40.5L33.5,40.5L33.5,44.2Z" fill="#fff"/></svg>
<svg class="a" style="left:3654px;top:334px;" width="54" height="58" viewBox="0 0 54 58"><rect x="8.5" y="16.5" width="35" height="23" fill="none" stroke="#3d5284" stroke-width="1.7"/><path d="M3.5,6L10.5,13" stroke="#4da6ff" stroke-width="2.2"/><path d="M13.0,15.5L6.5,15.5L13.0,9.0Z" fill="#4da6ff"/><path d="M48.5,6L41.5,13" stroke="#4da6ff" stroke-width="2.2"/><path d="M39.0,15.5L45.5,15.5L39.0,9.0Z" fill="#4da6ff"/><path d="M3.5,50L10.5,43" stroke="#4da6ff" stroke-width="2.2"/><path d="M13.0,40.5L6.5,40.5L13.0,47.0Z" fill="#4da6ff"/><path d="M48.5,50L41.5,43" stroke="#4da6ff" stroke-width="2.2"/><path d="M39.0,40.5L45.5,40.5L39.0,47.0Z" fill="#4da6ff"/></svg>
<svg class="a" style="left:3722px;top:340px;" width="46" height="44" viewBox="0 0 46 44"><rect x="1" y="2.1" width="42" height="9" fill="#41557f"/><rect x="1" y="17.5" width="42" height="9" fill="#41557f"/><rect x="1" y="32.6" width="42" height="9" fill="#41557f"/></svg>
<svg class="a" style="left:3724px;top:398px;" width="50" height="58" viewBox="0 0 50 58"><path d="M4,11L4,45Q4,51.5 19.8,51.5Q35.7,51.5 35.7,45L35.7,11Z" fill="#4da6ff" stroke="#3d5284" stroke-width="1.4"/><ellipse cx="19.8" cy="11" rx="15.8" ry="6.4" fill="#4da6ff" stroke="#3d5284" stroke-width="1.4"/><path d="M47,40.8L47,54.8L33,54.8Z" fill="#000"/></svg>
<div class="a" style="left:3716px;top:462px;width:56px;height:56px;background:#b4c5e3;"></div>
<svg class="a" style="left:3716px;top:462px;" width="56" height="56" viewBox="0 0 56 56"><path d="M4.5,5L51,13L51,36M4.5,5L4.5,47L20,44.5M4.5,26L51,27.5M20.5,8L20.5,44M37,10.5L37,30" fill="none" stroke="#3d5284" stroke-width="1.4"/><rect x="21" y="31" width="32" height="20.5" rx="10.2" fill="#b4c5e3"/><rect x="22.5" y="32.5" width="29" height="17.5" rx="8.7" fill="#4da6ff"/><circle cx="32" cy="41.2" r="5.8" fill="#fff"/></svg>
<div class="a" style="left:3716px;top:526px;width:56px;height:56px;background:#b4c5e3;"></div>
<svg class="a" style="left:3716px;top:526px;" width="56" height="56" viewBox="0 0 56 56"><path d="M4,24Q28,-1 52,24Q28,47 4,24Z" fill="#fff" stroke="#3d5284" stroke-width="1.4"/><circle cx="28" cy="24" r="11.5" fill="#fff" stroke="#3d5284" stroke-width="1.4"/><circle cx="28" cy="24" r="4.6" fill="#3d5284"/><rect x="21" y="31" width="32" height="20.5" rx="10.2" fill="#b4c5e3"/><rect x="22.5" y="32.5" width="29" height="17.5" rx="8.7" fill="#4da6ff"/><circle cx="32" cy="41.2" r="5.8" fill="#fff"/></svg>
<div class="a" style="left:3716px;top:590px;width:56px;height:56px;background:rgba(255,255,255,0.85);"></div>
<svg class="a" style="left:3716px;top:590px;" width="56" height="56" viewBox="0 0 56 56"><path d="M4,24Q28,-1 52,24Q28,47 4,24Z" fill="#fff" stroke="#3d5284" stroke-width="1.4"/><circle cx="28" cy="24" r="11.5" fill="#4da6ff" stroke="#3d5284" stroke-width="1.4"/><circle cx="28" cy="24" r="4.6" fill="#3d5284"/><path d="M27,25L47,33L40.5,36.5L51,47L47,51L36.5,40.5L33.5,46.5Z" fill="#4da6ff" stroke="#fff" stroke-width="1.2"/><path d="M55,40.5L55,54.5L41,54.5Z" fill="#000"/></svg>
<div class="a" style="left:3460px;top:2040px;width:56px;height:56px;background:#b4c5e3;"></div>
<svg class="a" style="left:3460px;top:2040px;" width="56" height="56" viewBox="0 0 56 56"><rect x="5" y="5" width="19" height="19" fill="#fff" stroke="#3d5284" stroke-width="2"/><rect x="5" y="33" width="19" height="19" fill="#fff" stroke="#3d5284" stroke-width="2"/><rect x="33" y="5" width="19" height="19" fill="#fff" stroke="#3d5284" stroke-width="2"/><rect x="33" y="33" width="19" height="19" fill="#fff" stroke="#3d5284" stroke-width="2"/></svg>
<div class="a" style="left:3588px;top:2040px;width:56px;height:56px;background:#c6c6c6;"></div>
<div class="a" style="left:3652px;top:2040px;width:56px;height:56px;background:#c6c6c6;"></div>
<div class="a" style="left:3716px;top:2040px;width:56px;height:56px;background:#c6c6c6;"></div>
<svg class="a" style="left:3588px;top:2040px;" width="56" height="56" viewBox="0 0 56 56"><path d="M9.5,27L9.5,20.5A14,14 0 0 1 37.5,20.5L37.5,27" fill="none" stroke="#3d5284" stroke-width="7.5"/><path d="M9.5,27L9.5,20.5A14,14 0 0 1 37.5,20.5L37.5,27" fill="none" stroke="#fff" stroke-width="3.5"/><rect x="5" y="26.5" width="37" height="24" rx="4" fill="#4da6ff" stroke="#3d5284" stroke-width="2.2"/><circle cx="21.5" cy="35" r="2.6" fill="#3d5284"/><rect x="20.5" y="35" width="2.2" height="9" fill="#3d5284"/><g stroke="#c6c6c6" stroke-width="5"><path d="M24.0,27.0L41.7,33.3L37.4,37.5L49.1,49.2L45.7,52.7L34.0,41.0L29.7,45.2Z" fill="#fff"  stroke-linejoin="miter"/></g><path d="M24.0,27.0L41.7,33.3L37.4,37.5L49.1,49.2L45.7,52.7L34.0,41.0L29.7,45.2Z" fill="#fff" stroke="#3d5284" stroke-width="2.2" stroke-linejoin="miter"/></svg>
<svg class="a" style="left:3652px;top:2040px;" width="56" height="56" viewBox="0 0 56 56"><path d="M6.5,6.5L37.5,17.5L30.0,25.0L50.5,45.5L44.5,51.5L24.0,31.0L16.5,38.5Z" fill="#fff" stroke="#3d5284" stroke-width="2.4" stroke-linejoin="miter"/></svg>
<svg class="a" style="left:3716px;top:2040px;" width="56" height="56" viewBox="0 0 56 56"><circle cx="22" cy="22" r="16.5" fill="none" stroke="#4da6ff" stroke-width="2.6"/><circle cx="22" cy="22" r="10" fill="none" stroke="#4da6ff" stroke-width="2.6"/><circle cx="22" cy="22" r="4.3" fill="#4da6ff"/><path d="M19.0,19.5L41.3,27.4L35.9,32.8L50.7,47.6L46.4,51.9L31.6,37.1L26.2,42.5Z" fill="#fff" stroke="#3d5284" stroke-width="2.3" stroke-linejoin="miter"/></svg>
<span class="t" style="left:1.2px;top:2124.9px;font-size:22.3px;color:#111;transform:scaleX(1.0089);">Edit cylindrical face: Select faces - Select a face</span>
<div class="a" style="left:0px;top:2157.5px;width:3840px;height:3px;background:#1e1e1e;"></div>
<div class="a" style="left:2787px;top:2115px;width:42px;height:38px;background:#e0e0e0;"></div>
<svg class="a" style="left:2789px;top:2120px;" width="34" height="27" viewBox="0 0 34 27"><path d="M2,13.4L17,1.8L31.5,13.4L17,25Z" fill="#4da6ff" stroke="#4a5a8a" stroke-width="1.8"/></svg>
<span class="t" style="left:2832.5px;top:2124.9px;font-size:22.3px;color:#111;transform:scaleX(1.0467);">Toggle</span>
<svg class="a" style="left:2912px;top:2116px;" width="34" height="35" viewBox="0 0 34 35"><circle cx="14.8" cy="15.4" r="13" fill="none" stroke="#3d5284" stroke-width="1.5" stroke-dasharray="4 2.2"/><rect x="15.5" y="16.8" width="17.2" height="17" fill="#fff"/><rect x="16.5" y="17.8" width="16.2" height="15.8" fill="#4da6ff"/><rect x="19.5" y="21.5" width="10.2" height="9.2" fill="#fff"/><rect x="21.3" y="23.2" width="6.6" height="1.6" fill="#4da6ff"/><rect x="21.3" y="26.6" width="6.6" height="1.6" fill="#4da6ff"/></svg>
<svg class="a" style="left:2954px;top:2117px;" width="34" height="34" viewBox="0 0 34 34"><path d="M2,2L32,2L32,28L13,28L9,32.5L8,28L2,28Z" fill="#fff" stroke="#3d5284" stroke-width="1.8"/></svg><span class="t" style="left:2964.1px;top:2121.8px;font-size:23px;color:#4da6ff;font-weight:bold;">?</span>
<svg class="a" style="left:2995px;top:2117px;" width="36" height="34" viewBox="0 0 36 34"><path d="M4,4L4,31L11,31M4,11L10,11M4,20.5L10,20.5" stroke="#3d5284" stroke-width="1.7" fill="none"/><circle cx="4" cy="3.8" r="2" fill="#fff" stroke="#3d5284" stroke-width="1.3"/><circle cx="16.6" cy="8.5" r="3.2" fill="#4da6ff" stroke="#3d5284" stroke-width="1.3"/><circle cx="16.6" cy="18.5" r="3" fill="#fff" stroke="#3d5284" stroke-width="1.3"/><rect x="14.5" y="20" width="19.5" height="12.6" rx="6.3" fill="#fff"/><rect x="15.5" y="21" width="17.5" height="10.6" rx="5.3" fill="#4da6ff"/><circle cx="21" cy="26.3" r="3.6" fill="#fff"/></svg>
<svg class="a" style="left:3038px;top:2130px;" width="11" height="6" viewBox="0 0 11 6"><path d="M0,0L10.5,0L5.25,5.5Z" fill="#777"/></svg>
<svg class="a" style="left:3056px;top:2117px;" width="36" height="34" viewBox="0 0 36 34"><circle cx="15.5" cy="15.3" r="6.4" fill="none" stroke="#3d5284" stroke-width="1.6"/><path d="M15.5,1.5L15.5,22M1,15.3L30,15.3" stroke="#3d5284" stroke-width="1.8"/><rect x="13.5" y="20" width="19.5" height="12.6" rx="6.3" fill="#fff"/><rect x="14.5" y="21" width="17.5" height="10.6" rx="5.3" fill="#4da6ff"/><circle cx="20" cy="26.3" r="3.6" fill="#fff"/></svg>
<span class="t" style="left:3100.0px;top:2124.9px;font-size:22.3px;color:#111;transform:scaleX(1.0116);">Absolute XY Top</span>
<svg class="a" style="left:3277px;top:2130px;" width="11" height="6" viewBox="0 0 11 6"><path d="M0,0L10.5,0L5.25,5.5Z" fill="#777"/></svg>
<span class="t" style="left:3296.4px;top:2124.9px;font-size:22.3px;color:#111;transform:scaleX(0.9426);">View REL</span>
<svg class="a" style="left:3397.5px;top:2130px;" width="11" height="6" viewBox="0 0 11 6"><path d="M0,0L10.5,0L5.25,5.5Z" fill="#777"/></svg>
<span class="t" style="left:3416.3px;top:2124.9px;font-size:22.3px;color:#f58233;transform:scaleX(0.9936);">X =-0410.646</span>
<span class="t" style="left:3558.5px;top:2124.9px;font-size:22.3px;color:#f58233;transform:scaleX(1.0073);">Y =-1191.505</span>
<span class="t" style="left:3700.3px;top:2124.9px;font-size:22.3px;color:#111;transform:scaleX(0.9867);">Z = 0000.000</span>
</body></html>
